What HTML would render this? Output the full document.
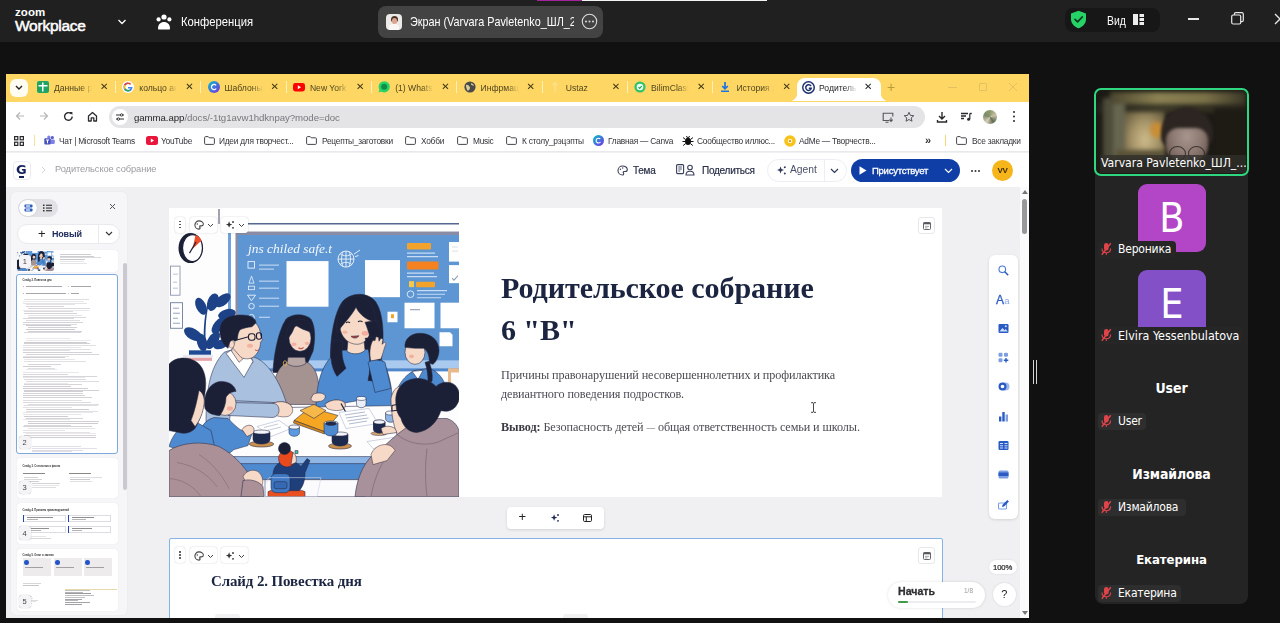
<!DOCTYPE html>
<html lang="ru">
<head>
<meta charset="utf-8">
<title>Zoom Workplace</title>
<style>
*{box-sizing:border-box;margin:0;padding:0}
html,body{width:1280px;height:623px;overflow:hidden;background:#111;font-family:"Liberation Sans","DejaVu Sans",sans-serif;}
#root{position:absolute;left:0;top:0;width:1280px;height:623px;overflow:hidden;background:#111;}
.abs{position:absolute}
/* ---------- zoom top bar ---------- */
#zbar{position:absolute;left:0;top:0;width:1280px;height:42px;background:#202020;color:#fff}
#zbar .t{position:absolute;white-space:nowrap;color:#fff}
/* ---------- shared screen ---------- */
#scr{position:absolute;left:6px;top:74px;width:1023px;height:544px;background:#f0eff2;overflow:hidden;filter:blur(.35px)}
#tabs{position:absolute;left:0;top:0;width:1023px;height:27.500px;background:#fdd663}
.tab{position:absolute;top:0;height:27px;font-size:8.6px;color:#50461f;white-space:nowrap}
.tab .tx{position:absolute;left:18px;top:8.5px;width:38px;overflow:hidden;-webkit-mask-image:linear-gradient(90deg,#000 70%,transparent 100%);mask-image:linear-gradient(90deg,#000 70%,transparent 100%)}
.tab .ic{position:absolute;left:1px;top:7px;width:12px;height:12px}
.tab .x{position:absolute;left:64px;top:6.5px;font-size:10px;color:#3c3514;font-weight:bold}
.tab .sep{position:absolute;left:79px;top:7px;width:1px;height:12px;background:#fff0b8}
#tool{position:absolute;left:0;top:27.500px;width:1023px;height:28.500px;background:#fff}
#omni{position:absolute;left:103px;top:4px;width:816px;height:22px;border-radius:11px;background:#e4e3e6}
#bm{position:absolute;left:0;top:56px;width:1023px;height:22px;background:#fff;font-size:8.350px;color:#33343a;border-bottom:1px solid #e9e8ec}
#bm .b{position:absolute;top:6px;white-space:nowrap;letter-spacing:-.25px}
.fold{position:absolute;top:6px;width:11px;height:9px}
/* ---------- gamma ---------- */
#gh{position:absolute;left:0;top:79px;width:1023px;height:34px;background:#fff}
#gbody{position:absolute;left:0;top:113px;width:1023px;height:431px;background:#f0eff2}
.gt{font-size:10px;color:#2a3048;white-space:nowrap;letter-spacing:-.25px;font-weight:500;-webkit-text-stroke:.2px #2a3048;margin-top:.5px}
.ser{font-family:"Liberation Serif","DejaVu Serif",serif}
.tn{font-size:7.500px;color:#444;font-weight:500}
.zt{font-family:"DejaVu Sans Condensed","DejaVu Sans","Liberation Sans",sans-serif}
.nm{font-size:12px;color:#fff;white-space:nowrap;letter-spacing:-.2px}
.sx{transform-origin:0 50%}
</style>
</head>
<body>
<div id="root">

<!-- ================= ZOOM TOP BAR ================= -->
<div id="zbar">
  <div class="t" style="left:15px;top:5.500px;font-size:11.500px;font-weight:bold;letter-spacing:.1px">zoom</div>
  <div class="t" style="left:15px;top:16.500px;font-size:15.500px;font-weight:normal;letter-spacing:-.25px;-webkit-text-stroke:.5px #fff">Workplace</div>
  <svg class="abs" style="left:117px;top:17.500px" width="10" height="8" viewBox="0 0 10 8"><path d="M1.5 2 L5 5.5 L8.5 2" fill="none" stroke="#fff" stroke-width="1.3"/></svg>
  <svg class="abs" style="left:155px;top:13px" width="18" height="17" viewBox="0 0 18 17"><g fill="#fff"><circle cx="9" cy="4" r="2.6"/><circle cx="3.6" cy="6.4" r="2.1"/><circle cx="14.4" cy="6.4" r="2.1"/><path d="M3 15.5c0-4 2.6-6.4 6-6.4s6 2.4 6 6.400c0 .6-.4 1-1 1H4c-.6 0-1-.4-1-1z"/></g></svg>
  <div class="t sx" style="left:181px;top:13.500px;font-size:13px;transform:scaleX(.865)">Конференция</div>
  <!-- share pill -->
  <div class="abs" style="left:378px;top:6px;width:225px;height:32px;border-radius:8px;background:#434343"></div>
  <div class="abs" style="left:386px;top:14px;width:16px;height:16px;border-radius:4px;background:#ece9e6;overflow:hidden"><div class="abs" style="left:4.500px;top:1.500px;width:7px;height:6px;border-radius:3.500px 3.500px 2px 2px;background:#4a3328"></div><div class="abs" style="left:5.500px;top:3.500px;width:5px;height:6px;border-radius:2.500px;background:#dba58d"></div><div class="abs" style="left:3px;top:10px;width:10px;height:8px;border-radius:4px 4px 0 0;background:#faf8f6"></div></div>
  <div class="abs" style="left:410px;top:10px;width:164px;height:24px;overflow:hidden"><div class="t sx" style="left:0;top:3.500px;font-size:13px;transform:scaleX(.832)">Экран (Varvara Pavletenko_ШЛ_2</div></div>
  <svg class="abs" style="left:581px;top:13px" width="17" height="17" viewBox="0 0 17 17"><circle cx="8.500" cy="8.500" r="7.2" fill="none" stroke="#ddd" stroke-width="1.1"/><circle cx="5" cy="8.500" r="1" fill="#ddd"/><circle cx="8.500" cy="8.500" r="1" fill="#ddd"/><circle cx="12" cy="8.500" r="1" fill="#ddd"/></svg>
  <!-- security + view -->
  <div class="abs" style="left:1065px;top:8px;width:95px;height:24px;border-radius:8px;background:#171717"></div>
  <svg class="abs" style="left:1070px;top:10px" width="17" height="19" viewBox="0 0 17 19"><path d="M8.500 .8 L16 3.600 V9c0 4.600-3.200 7.800-7.500 9.300C4.200 16.800 1 13.600 1 9V3.600z" fill="#26d367"/><path d="M5 9.300l2.600 2.600 4.700-5" fill="none" stroke="#0d3b1e" stroke-width="1.700" stroke-linecap="round" stroke-linejoin="round"/></svg>
  <div class="t sx" style="left:1107px;top:12.500px;font-size:13px;transform:scaleX(.8)">Вид</div>
  <svg class="abs" style="left:1133px;top:14px" width="11" height="11" viewBox="0 0 11 11"><rect x="0" y="0" width="5" height="11" fill="#eee"/><rect x="6.500" y="0" width="4.500" height="3" fill="#eee"/><rect x="6.500" y="4" width="4.500" height="3" fill="#eee"/><rect x="6.500" y="8" width="4.500" height="3" fill="#eee"/></svg>
  <div class="abs" style="left:1188px;top:18px;width:11px;height:1.5px;background:#e8e8e8"></div>
  <svg class="abs" style="left:1231px;top:12px" width="13" height="13" viewBox="0 0 13 13"><rect x=".7" y="3" width="9" height="9" rx="1.500" fill="none" stroke="#e8e8e8" stroke-width="1.200"/><path d="M3.300 3V2.200c0-.8.600-1.500 1.500-1.500h6c.8 0 1.500.7 1.500 1.500v6c0 .8-.6 1.500-1.500 1.500h-1" fill="none" stroke="#e8e8e8" stroke-width="1.200"/></svg>
  <svg class="abs" style="left:1274px;top:13px" width="12" height="12" viewBox="0 0 12 12"><path d="M1 1l10 10M11 1L1 11" stroke="#e8e8e8" stroke-width="1.300"/></svg>
</div>
<!-- little white / pink strip at very top -->
<div class="abs" style="left:537px;top:0;width:45px;height:1.300px;background:#a3249a"></div>
<div class="abs" style="left:582px;top:0;width:185px;height:1.300px;background:#f4f4f4"></div>

<!-- ================= SHARED SCREEN ================= -->
<div id="scr">
  <div id="tabs">
<div class="abs" style="left:4px;top:5px;width:18px;height:18px;border-radius:6px;background:#fffdf2"></div><svg class="abs" style="left:9px;top:11px" width="8" height="6" viewBox="0 0 8 6"><path d="M1 1l3 3 3-3" fill="none" stroke="#222" stroke-width="1.400"/></svg>
<div class="tab" style="left:30.0px"><svg class="ic" viewBox="0 0 12 12"><rect x="0" y="0" width="12" height="12" rx="2" fill="#1fa463"/><rect x="5" y="1.500" width="1.500" height="9" fill="#fff"/><rect x="1.500" y="4" width="9" height="1.500" fill="#fff"/></svg><span class="tx">Данные р</span><span class="x">✕</span><span class="sep"></span></div>
<div class="tab" style="left:115.3px"><svg class="ic" viewBox="0 0 12 12"><circle cx="6" cy="6" r="6" fill="#fff"/><path d="M6 2.300a3.700 3.700 0 1 0 3.600 4.500H6" fill="none" stroke="#4285f4" stroke-width="1.600"/><path d="M2.800 4.200A3.700 3.700 0 0 1 8.600 3.300" fill="none" stroke="#ea4335" stroke-width="1.600"/><path d="M2.800 7.800A3.700 3.700 0 0 1 2.800 4.200" fill="none" stroke="#fbbc05" stroke-width="1.600"/><path d="M2.800 7.800A3.700 3.700 0 0 0 8 9.100" fill="none" stroke="#34a853" stroke-width="1.600"/></svg><span class="tx">кольцо ан</span><span class="x">✕</span><span class="sep"></span></div>
<div class="tab" style="left:200.6px"><svg class="ic" viewBox="0 0 12 12"><defs><linearGradient id="cv" x1="0" y1="0" x2="1" y2="1"><stop offset="0" stop-color="#00c4cc"/><stop offset="1" stop-color="#7d2ae8"/></linearGradient></defs><circle cx="6" cy="6" r="6" fill="url(#cv)"/><path d="M8.200 7.500A2.600 2.600 0 1 1 8 4.300" fill="none" stroke="#fff" stroke-width="1.200"/></svg><span class="tx">Шаблоны</span><span class="x">✕</span><span class="sep"></span></div>
<div class="tab" style="left:285.9px"><svg class="ic" viewBox="0 0 12 12"><rect x="0" y="2" width="12" height="8.400" rx="2.400" fill="#f00"/><path d="M4.800 4.200L8 6.200 4.800 8.200z" fill="#fff"/></svg><span class="tx">New York</span><span class="x">✕</span><span class="sep"></span></div>
<div class="tab" style="left:371.2px"><svg class="ic" viewBox="0 0 12 12"><circle cx="6.200" cy="5.800" r="5.600" fill="#25d366"/><path d="M.6 11.600l1.200-3.400 2 2z" fill="#25d366"/><circle cx="6.200" cy="5.800" r="3" fill="#128c4a"/></svg><span class="tx">(1) Whats</span><span class="x">✕</span><span class="sep"></span></div>
<div class="tab" style="left:456.5px"><svg class="ic" viewBox="0 0 12 12"><circle cx="6" cy="6" r="5.600" fill="#4a4a4a"/><path d="M2 4c1.500-.5 2.500.5 3.500 1.500S6 8.500 4.500 9.500 2 6 2 4zM7 2c1 .5 2.500 1 3 2.500-1 .5-2-.3-3-1z" fill="#d9cf9a"/></svg><span class="tx">Инфрмац</span><span class="x">✕</span><span class="sep"></span></div>
<div class="tab" style="left:541.8px"><svg class="ic" viewBox="0 0 12 12"><path d="M6 1.500v9M3.500 4L6 1.500 8.500 4" stroke="#fbe08a" stroke-width="1.500" fill="none"/></svg><span class="tx">Ustaz</span><span class="x">✕</span><span class="sep"></span></div>
<div class="tab" style="left:627.1px"><svg class="ic" viewBox="0 0 12 12"><circle cx="6" cy="6" r="5.600" fill="#2fc36a"/><circle cx="6" cy="6" r="3.300" fill="#eafff0"/><path d="M4.500 6.200l1.200 1.200 2-2.400" stroke="#1d9d52" stroke-width="1.100" fill="none"/></svg><span class="tx">BilimClass</span><span class="x">✕</span><span class="sep"></span></div>
<div class="tab" style="left:712.4px"><svg class="ic" viewBox="0 0 12 12"><path d="M6 1v6.500M3.200 5L6 7.800 8.800 5" stroke="#1a73e8" stroke-width="1.700" fill="none"/><rect x="2" y="9.500" width="8" height="1.500" fill="#1a73e8"/></svg><span class="tx">История з</span><span class="x">✕</span></div>
<div class="abs" style="left:791px;top:4px;width:84px;height:23px;background:#fff;border-radius:8px 8px 0 0"></div>
<div class="abs" style="left:783px;top:19px;width:8px;height:8px;background:radial-gradient(circle at 0 0,transparent 8px,#fff 8.500px)"></div>
<div class="abs" style="left:875px;top:19px;width:8px;height:8px;background:radial-gradient(circle at 100% 0,transparent 8px,#fff 8.500px)"></div>
<svg class="abs" style="left:796px;top:7px" width="13" height="13" viewBox="0 0 13 13"><circle cx="6.500" cy="6.500" r="6.500" fill="#1c2f6e"/><circle cx="6.500" cy="6.500" r="5" fill="#fff"/><path d="M9 5.200A2.800 2.800 0 1 0 9.300 7.200H6.800" fill="none" stroke="#1c2f6e" stroke-width="1.500"/></svg>
<div class="tab" style="left:795px;color:#26272c"><span class="tx" style="left:18px">Родитель</span><span class="x" style="left:63px;color:#222">✕</span></div>
<div class="abs" style="left:881px;top:5px;font-size:14px;color:#b89b3a;font-weight:400">+</div>
<div class="abs" style="left:942px;top:13px;width:9px;height:1px;background:#e2c164"></div>
<div class="abs" style="left:973px;top:9px;width:8px;height:8px;border:1px solid #e2c164;border-radius:1px"></div>
<svg class="abs" style="left:1002px;top:8px" width="10" height="10" viewBox="0 0 10 10"><path d="M1 1l8 8M9 1L1 9" stroke="#e2c164" stroke-width="1"/></svg>
</div>
  <div id="tool">
<svg class="abs" style="left:9px;top:9px" width="10" height="10" viewBox="0 0 10 10"><path d="M9 5H1.500M5 1.500L1.500 5 5 8.500" fill="none" stroke="#b6b6ba" stroke-width="1.200"/></svg>
<svg class="abs" style="left:33px;top:9px" width="10" height="10" viewBox="0 0 10 10"><path d="M1 5h7.500M5 1.500L8.500 5 5 8.500" fill="none" stroke="#b6b6ba" stroke-width="1.200"/></svg>
<svg class="abs" style="left:57px;top:9px" width="11" height="11" viewBox="0 0 11 11"><path d="M9.200 5.500A3.800 3.800 0 1 1 8 2.700" fill="none" stroke="#2c2c30" stroke-width="1.400"/><path d="M6.400 1h3v3z" fill="#2c2c30"/></svg>
<svg class="abs" style="left:81px;top:9px" width="11" height="11" viewBox="0 0 11 11"><path d="M1.500 5L5.500 1.500 9.500 5V10H6.800V6.800H4.200V10H1.500z" fill="none" stroke="#2c2c30" stroke-width="1.300" stroke-linejoin="round"/></svg>
<div id="omni"></div>
<div class="abs" style="left:106px;top:7px;width:16px;height:16px;border-radius:8px;background:#fff"></div>
<svg class="abs" style="left:109px;top:10px" width="10" height="10" viewBox="0 0 10 10"><path d="M1 3h4M7.800 3H9M1 7h1.200M5 7h4" stroke="#333" stroke-width="1.100"/><circle cx="6.600" cy="3" r="1.200" fill="none" stroke="#333" stroke-width="1"/><circle cx="3.400" cy="7" r="1.200" fill="none" stroke="#333" stroke-width="1"/></svg>
<div class="abs" style="left:128px;top:10px;font-size:9.650px;color:#1f1f23;white-space:nowrap;letter-spacing:-.05px">gamma.app<span style="color:#77777c">/docs/-1tg1avw1hdknpay?mode=doc</span></div>
<svg class="abs" style="left:876px;top:10px" width="12" height="11" viewBox="0 0 12 11"><path d="M7 8.500H1.200V1.200H10.800V4.500" fill="none" stroke="#55565b" stroke-width="1.100"/><path d="M3.500 10.300h3M9 5.500v3.700M7.300 7.700L9 9.400l1.700-1.700" fill="none" stroke="#55565b" stroke-width="1.100"/></svg>
<svg class="abs" style="left:897px;top:9px" width="12" height="12" viewBox="0 0 12 12"><path d="M6 1.300l1.400 3.100 3.400.3-2.600 2.200.8 3.300L6 8.500 3 10.200l.8-3.300L1.200 4.700l3.400-.3z" fill="none" stroke="#55565b" stroke-width="1"/></svg>
<svg class="abs" style="left:930px;top:9px" width="12" height="12" viewBox="0 0 12 12"><path d="M6 1v6.500M3 5l3 3 3-3M1.500 9v2h9V9" fill="none" stroke="#2a2a2e" stroke-width="1.400"/></svg>
<svg class="abs" style="left:954px;top:9px" width="12" height="12" viewBox="0 0 12 12"><path d="M1 2.500h7M1 5h5M1 7.500h3" stroke="#2a2a2e" stroke-width="1.300"/><path d="M9.800 2.500v5.500" stroke="#2a2a2e" stroke-width="1.200"/><circle cx="8.600" cy="8.300" r="1.500" fill="#2a2a2e"/><path d="M9.800 2.500h2" stroke="#2a2a2e" stroke-width="1.400"/></svg>
<div class="abs" style="left:977px;top:8px;width:14px;height:14px;border-radius:50%;background:conic-gradient(#8c9a6a,#c9c1a5,#5f6f55,#d8cdb6,#7b8a6e,#8c9a6a)"></div>
<div class="abs" style="left:1007px;top:9px;width:2px;height:2px;border-radius:50%;background:#2a2a2e;box-shadow:0 4.500px 0 #2a2a2e,0 9px 0 #2a2a2e"></div>
</div>
  <div id="bm">
<svg class="abs" style="left:8px;top:6px" width="10" height="10" viewBox="0 0 10 10"><g fill="none" stroke="#2a2a2e" stroke-width="1.200"><rect x=".6" y=".6" width="3.200" height="3.200"/><rect x="6.200" y=".6" width="3.200" height="3.200"/><rect x=".6" y="6.200" width="3.200" height="3.200"/><rect x="6.200" y="6.200" width="3.200" height="3.200"/></g></svg>
<div class="abs" style="left:28px;top:5px;width:1px;height:11px;background:#f7e29a"></div>
<svg class="abs" style="left:38px;top:5px" width="11" height="11" viewBox="0 0 11 11"><circle cx="8.300" cy="2.600" r="1.700" fill="#5b5fc7"/><rect x="6" y="4.500" width="4.800" height="4.500" rx="1.200" fill="#7b83eb"/><circle cx="4.800" cy="2" r="1.600" fill="#7b83eb"/><rect x=".3" y="3.200" width="6.400" height="6.400" rx="1" fill="#4b53bc"/><path d="M2 5h3M3.500 5v3.300" stroke="#fff" stroke-width="1"/></svg>
<span class="b" style="left:53px">Чат | Microsoft Teams</span>
<svg class="abs" style="left:140px;top:6px" width="12" height="9" viewBox="0 0 12 9"><rect width="12" height="9" rx="2.500" fill="#e8163a"/><path d="M4.800 2.500L8 4.500 4.800 6.500z" fill="#fff"/></svg>
<span class="b" style="left:155px">YouTube</span>
<svg class="fold" style="left:198px" viewBox="0 0 11 9"><path d="M.6 1.600c0-.6.400-1 1-1h2.600l1 1.200h4.200c.6 0 1 .4 1 1v4.600c0 .6-.4 1-1 1H1.600c-.6 0-1-.4-1-1z" fill="none" stroke="#46474c" stroke-width="1"/></svg>
<span class="b" style="left:213px">Идеи для творчест...</span>
<svg class="fold" style="left:300px" viewBox="0 0 11 9"><path d="M.6 1.600c0-.6.400-1 1-1h2.600l1 1.200h4.200c.6 0 1 .4 1 1v4.600c0 .6-.4 1-1 1H1.600c-.6 0-1-.4-1-1z" fill="none" stroke="#46474c" stroke-width="1"/></svg>
<span class="b" style="left:316px">Рецепты_заготовки</span>
<svg class="fold" style="left:399px" viewBox="0 0 11 9"><path d="M.6 1.600c0-.6.400-1 1-1h2.600l1 1.200h4.200c.6 0 1 .4 1 1v4.600c0 .6-.4 1-1 1H1.600c-.6 0-1-.4-1-1z" fill="none" stroke="#46474c" stroke-width="1"/></svg>
<span class="b" style="left:415px">Хобби</span>
<svg class="fold" style="left:451px" viewBox="0 0 11 9"><path d="M.6 1.600c0-.6.400-1 1-1h2.600l1 1.200h4.200c.6 0 1 .4 1 1v4.600c0 .6-.4 1-1 1H1.600c-.6 0-1-.4-1-1z" fill="none" stroke="#46474c" stroke-width="1"/></svg>
<span class="b" style="left:467px">Music</span>
<svg class="fold" style="left:500px" viewBox="0 0 11 9"><path d="M.6 1.600c0-.6.400-1 1-1h2.600l1 1.200h4.200c.6 0 1 .4 1 1v4.600c0 .6-.4 1-1 1H1.600c-.6 0-1-.4-1-1z" fill="none" stroke="#46474c" stroke-width="1"/></svg>
<span class="b" style="left:516px">К столу_рэцэпты</span>
<svg class="abs" style="left:587px;top:5px" width="11" height="11" viewBox="0 0 11 11"><circle cx="5.500" cy="5.500" r="5.500" fill="url(#cv)"/><path d="M7.500 7A2.400 2.400 0 1 1 7.300 4" fill="none" stroke="#fff" stroke-width="1.100"/></svg>
<span class="b" style="left:602px">Главная — Canva</span>
<svg class="abs" style="left:676px;top:5px" width="12" height="12" viewBox="0 0 12 12"><ellipse cx="6" cy="6.300" rx="3" ry="3.600" fill="#111"/><path d="M1 2.500l2.500 2M11 2.500l-2.500 2M.5 6.500h3M11.500 6.500h-3M1.200 10.500l2.500-2M10.800 10.500l-2.500-2M4.500 1l1 2M7.500 1l-1 2" stroke="#111" stroke-width="1"/></svg>
<span class="b" style="left:691px">Сообщество иллюс...</span>
<svg class="abs" style="left:778px;top:5px" width="12" height="12" viewBox="0 0 12 12"><circle cx="6" cy="6" r="5.800" fill="#f9c21b"/><circle cx="6" cy="6" r="2.300" fill="#fff3c4"/><circle cx="6" cy="6" r="1" fill="#c98700"/></svg>
<span class="b" style="left:793px">AdMe — Творчеств...</span>
<span class="b" style="left:919px;top:3.500px;font-size:11px;font-weight:bold;color:#333">»</span>
<div class="abs" style="left:939px;top:5px;width:1px;height:11px;background:#f4d66d"></div>
<svg class="fold" style="left:950px" viewBox="0 0 11 9"><path d="M.6 1.600c0-.6.400-1 1-1h2.600l1 1.200h4.200c.6 0 1 .4 1 1v4.600c0 .6-.4 1-1 1H1.600c-.6 0-1-.4-1-1z" fill="none" stroke="#46474c" stroke-width="1"/></svg>
<span class="b" style="left:966px">Все закладки</span>
</div>
  <div id="gh">
<div class="abs" style="left:7px;top:8px;width:18px;height:19px;border:1px solid #ececf0;border-radius:4px;background:#fff"></div>
<div class="abs" style="left:10px;top:9px;font-size:13px;font-weight:bold;color:#14205a;font-family:'DejaVu Sans','Liberation Sans',sans-serif">G</div>
<div class="abs" style="left:13px;top:23px;width:5px;height:1.500px;background:#14205a"></div>
<svg class="abs" style="left:35px;top:13px" width="5" height="8" viewBox="0 0 5 8"><path d="M1 1l3 3-3 3" fill="none" stroke="#d2d2d8" stroke-width="1"/></svg>
<div class="abs" style="left:49px;top:11px;font-size:9.300px;color:#9b9ba3;white-space:nowrap;letter-spacing:-.1px">Родительское собрание</div>
<svg class="abs" style="left:611px;top:12px" width="11" height="11" viewBox="0 0 11 11"><path d="M5.500 1a4.500 4.500 0 1 0 0 9c.8 0 1.200-.5 1.200-1.100 0-.7-.5-.9-.5-1.500 0-.5.400-.9 1-.9h1.200c1.100 0 1.900-.8 1.900-2C10.300 2.600 8.200 1 5.500 1z" fill="none" stroke="#3a405a" stroke-width="1.100"/><circle cx="3.400" cy="4.200" r=".7" fill="#3a405a"/><circle cx="5.700" cy="3" r=".7" fill="#3a405a"/></svg>
<div class="abs gt" style="left:627px;top:11px">Тема</div>
<svg class="abs" style="left:670px;top:11px" width="20" height="12" viewBox="0 0 20 12"><rect x=".6" y=".6" width="7" height="9" rx="1" fill="none" stroke="#3a405a" stroke-width="1.100"/><path d="M2.300 3h3.600M2.300 5h3.600M2.300 7h2" stroke="#3a405a" stroke-width=".9"/><circle cx="14" cy="3.500" r="2.300" fill="none" stroke="#3a405a" stroke-width="1.100"/><path d="M10 11c0-2.300 1.700-3.700 4-3.700s4 1.400 4 3.700z" fill="none" stroke="#3a405a" stroke-width="1.100"/></svg>
<div class="abs gt" style="left:696px;top:11px">Поделиться</div>
<div class="abs" style="left:761px;top:6px;width:80px;height:23px;border:1px solid #eceef4;border-radius:12px;background:#fff"></div>
<div class="abs" style="left:818px;top:7px;width:1px;height:21px;background:#eceef4"></div>
<svg class="abs" style="left:770px;top:12px" width="11" height="11" viewBox="0 0 11 11"><path d="M4.500 1.500l1 2.500 2.500 1-2.500 1-1 2.500-1-2.500L1 5l2.500-1z" fill="#333b63"/><circle cx="8.800" cy="2.200" r="1" fill="#333b63"/><circle cx="8.800" cy="8.600" r="1" fill="#333b63"/></svg>
<div class="abs" style="left:784px;top:11px;font-size:10.300px;color:#4a5068;white-space:nowrap">Agent</div>
<svg class="abs" style="left:824px;top:15px" width="9" height="6" viewBox="0 0 9 6"><path d="M1 1l3.500 3.500L8 1" fill="none" stroke="#2a3158" stroke-width="1.100"/></svg>
<div class="abs" style="left:845px;top:6px;width:109px;height:23px;border-radius:12px;background:#0f3fa6"></div>
<svg class="abs" style="left:853px;top:13px" width="8" height="9" viewBox="0 0 8 9"><path d="M.5 .3L7.500 4.500 .5 8.700z" fill="#fff"/></svg>
<div class="abs" style="left:866px;top:12px;font-size:9.500px;color:#fff;white-space:nowrap;letter-spacing:-.25px;-webkit-text-stroke:.3px #fff">Присутствует</div>
<svg class="abs" style="left:938px;top:15px" width="9" height="6" viewBox="0 0 9 6"><path d="M1 1l3.500 3.500L8 1" fill="none" stroke="#fff" stroke-width="1.100"/></svg>
<div class="abs" style="left:965px;top:17px;width:2px;height:2px;border-radius:50%;background:#333;box-shadow:3.500px 0 0 #333,7px 0 0 #333"></div>
<div class="abs" style="left:986px;top:7px;width:21px;height:21px;border-radius:50%;background:#f6b51a;color:#3a2a00;font-size:8px;font-weight:bold;text-align:center;line-height:21px;letter-spacing:-.3px">VV</div>
</div>
  <div id="gbody">
<div class="abs" style="left:5px;top:5px;width:115.5px;height:423px;background:#f6f5f8;border-radius:5px;box-shadow:0 0 2px rgba(0,0,0,.06)"></div>
<div class="abs" style="left:12px;top:12px;width:39.5px;height:17.5px;background:#e2e2e6;border-radius:9px"></div>
<div class="abs" style="left:13px;top:13px;width:18px;height:15.5px;background:#fff;border-radius:8px;box-shadow:0 0 1px rgba(0,0,0,.3)"></div>
<svg class="abs" style="left:17.5px;top:16.5px" width="9" height="8" viewBox="0 0 9 8"><rect x=".5" y=".5" width="8" height="3" rx=".8" fill="#2b5fc0"/><rect x=".5" y="4.500" width="8" height="3" rx=".8" fill="#2b5fc0"/><rect x="2" y="1.400" width="4" height="1.200" fill="#fff"/><rect x="2" y="5.400" width="4" height="1.200" fill="#fff"/></svg>
<svg class="abs" style="left:37px;top:16.5px" width="9" height="8" viewBox="0 0 9 8"><g fill="#333"><rect x="0" y=".5" width="1.500" height="1.500"/><rect x="0" y="3.300" width="1.500" height="1.500"/><rect x="0" y="6" width="1.500" height="1.500"/><rect x="3" y=".7" width="6" height="1.100"/><rect x="3" y="3.500" width="6" height="1.100"/><rect x="3" y="6.200" width="6" height="1.100"/></g></svg>
<svg class="abs" style="left:103px;top:16px" width="7" height="7" viewBox="0 0 7 7"><path d="M1 1l5 5M6 1L1 6" stroke="#555" stroke-width="1"/></svg>
<div class="abs" style="left:11px;top:36.5px;width:102.5px;height:20.5px;background:#fff;border:1px solid #e9e9ee;border-radius:11px"></div>
<div class="abs" style="left:92px;top:37.5px;width:1px;height:18.5px;background:#e9e9ee"></div>
<div class="abs" style="left:32px;top:38.5px;font-size:13px;color:#222;font-weight:400">+</div>
<div class="abs" style="left:46px;top:41.5px;font-size:9px;color:#1d2a5c;font-weight:bold;letter-spacing:-.2px">Новый</div>
<svg class="abs" style="left:99px;top:44px" width="8" height="6" viewBox="0 0 8 6"><path d="M1 1l3 3 3-3" fill="none" stroke="#333" stroke-width="1.100"/></svg>
<div class="abs" style="left:117px;top:76px;width:3.5px;height:227px;background:#c9c9cf;border-radius:2px"></div>
<div class="abs" style="left:10.5px;top:63px;width:101px;height:22px;background:#fff;border-radius:3px;box-shadow:0 0 1px rgba(0,0,0,.15)"></div>
<svg id="illt" class="abs" style="left:10.5px;top:63.5px;border-radius:2px" width="37.500" height="20.500" viewBox="0 70 290 158" preserveAspectRatio="xMidYMid slice"><rect width="290" height="274" fill="#fdfdfe"/><rect x="56" y="1" width="234" height="1.500" fill="#56688f"/><rect x="66" y="9.500" width="224" height="4" fill="#8a8ca6"/><rect x="59" y="7" width="3" height="80" fill="#6fa0d8"/><rect x="62" y="9" width="7" height="125" fill="#fff"/><rect x="66.500" y="9.500" width="2.500" height="125" fill="#8a8ca6"/><rect x="69" y="13" width="221" height="127" fill="#5d96d2"/><rect x="69" y="138" width="221" height="9" fill="#a9c9ee"/><rect x="69" y="146" width="221" height="3" fill="#4f86c9"/><g transform="translate(-3 0)"><rect x="82" y="39.5" width="6.500" height="6.500" fill="none" stroke="#eaf2fc" stroke-width=".9"/><path d="M93 43h20" stroke="#dbe8f8" stroke-width=".9"/><path d="M83 61l2.500-7 2.500 7z" fill="none" stroke="#eaf2fc" stroke-width=".8"/><path d="M93 59h20" stroke="#dbe8f8" stroke-width=".9"/><rect x="82.500" y="64" width="6" height="3.500" fill="none" stroke="#eaf2fc" stroke-width=".8"/><path d="M93 66h20" stroke="#dbe8f8" stroke-width=".9"/><path d="M81.500 73h8l-4 5.500z" fill="none" stroke="#eaf2fc" stroke-width=".9"/><path d="M93 76h20" stroke="#dbe8f8" stroke-width=".9"/><circle cx="85.500" cy="84" r="2.800" fill="none" stroke="#eaf2fc" stroke-width=".9"/><path d="M93 84h20" stroke="#dbe8f8" stroke-width=".9"/><circle cx="85.500" cy="95" r="2.800" fill="none" stroke="#eaf2fc" stroke-width=".9"/><path d="M93 95h11" stroke="#dbe8f8" stroke-width=".9"/><path d="M93 47h15" stroke="#dbe8f8" stroke-width=".9"/></g><rect x="117.500" y="39" width="42" height="45.500" fill="#fff"/><rect x="196" y="38" width="35" height="37" fill="#fff"/><g fill="none" stroke="#eef4fc" stroke-width=".9"><circle cx="177" cy="37" r="8"/><path d="M169 37h16M177 29v16M171 31.500c4 3 8 3 12 0M171 42.500c4-3 8-3 12 0M174 29.500c-2 5-2 10 0 15M180 29.500c2 5 2 10 0 15"/><path d="M185 32l6-4M186 34.500l3.500-1"/></g><rect x="238" y="21" width="24" height="6.500" rx="1" fill="#f3a22c"/><path d="M238 31h28M238 34.500h31" stroke="#c8dcf4" stroke-width="1.100"/><rect x="238" y="39.500" width="31.500" height="8" rx="1" fill="#f5811f"/><path d="M238 51h27M238 54.500h30" stroke="#c8dcf4" stroke-width="1.100"/><rect x="240" y="59" width="5" height="6" fill="#f7c948"/><rect x="247" y="59.500" width="19" height="5.500" rx="1" fill="#f3a22c"/><circle cx="241.500" cy="72" r="3.300" fill="none" stroke="#e6effa" stroke-width=".9"/><path d="M248 68.500h30M248 72h28M248 75.500h24" stroke="#c8dcf4" stroke-width="1.100"/><rect x="280" y="20" width="10" height="19.500" fill="#fff"/><path d="M283 25h6M283 29h6" stroke="#c9cfdc" stroke-width=".7"/><rect x="280" y="43" width="10" height="18" fill="#fff"/><path d="M283 56l2 2 4-4.500" fill="none" stroke="#8d9ab8" stroke-width="1"/><rect x="218.500" y="89.500" width="10" height="10.500" fill="#fff"/><rect x="222" y="92" width="3" height="4" fill="#f3a22c"/><rect x="235.500" y="80.500" width="30" height="25.500" fill="#fff"/><path d="M241 87.500h10" stroke="#7a86a8" stroke-width=".9"/><rect x="271.500" y="80.500" width="18.500" height="25.500" fill="#fff"/><path d="M270.500 110h10.500l2.500 2.500v11.500h-13z" fill="#fff"/><ellipse cx="21.500" cy="26" rx="12" ry="15" fill="#1b2036"/><ellipse cx="23.500" cy="26" rx="10" ry="13.500" fill="#fff" stroke="#1b2036" stroke-width="1.200"/><path d="M23.500 27L26.500 13a10 13 0 0 1 6 5.500z" fill="#ee4f2a"/><path d="M27 20l-6.500 11" stroke="#1b2036" stroke-width="1.200"/><rect x="1.500" y="44" width="9.500" height="29" fill="#fff" stroke="#7d88a4" stroke-width=".8"/><path d="M4 52h5M4 60h4M4 66h5" stroke="#9aa7c4" stroke-width=".7"/><rect x="1.500" y="80.500" width="12" height="25.500" fill="#fff" stroke="#6f7c9c" stroke-width=".9"/><path d="M4 86h6M4 91h7M4 96h5M4 101h7" stroke="#7f8eb3" stroke-width=".8"/><g fill="#1d4288"><path d="M35 128c-1-18 0-32 3-45l1.500.3c-3 13-3.500 27-2.500 44.700z"/><ellipse cx="32" cy="84" rx="5" ry="9" transform="rotate(-25 32 84)"/><ellipse cx="44" cy="80" rx="5.500" ry="9" transform="rotate(20 44 80)"/><ellipse cx="54" cy="78" rx="5" ry="9" transform="rotate(50 54 78)"/><ellipse cx="58" cy="92" rx="5" ry="9" transform="rotate(75 58 92)"/><ellipse cx="50" cy="103" rx="5" ry="10" transform="rotate(40 50 103)"/><ellipse cx="24" cy="112" rx="5.500" ry="10" transform="rotate(-60 24 112)"/><ellipse cx="33" cy="120" rx="5" ry="9" transform="rotate(-15 33 120)"/><ellipse cx="44" cy="118" rx="5" ry="10" transform="rotate(35 44 118)"/><ellipse cx="52" cy="122" rx="4.500" ry="8" transform="rotate(70 52 122)"/></g><rect x="20" y="128" width="22" height="4.500" fill="#1f4b94"/><rect x="14" y="132.500" width="30" height="3" fill="#e8e8ef"/><rect x="16" y="135.500" width="27" height="3" fill="#e6a3a8"/><path d="M279 146h11v4h-8v12h-3z" fill="#e8b98a"/><g stroke="#262b47" stroke-width=".55" stroke-linejoin="round"><g transform="translate(0 3)"><path d="M222 186c3-22 12-36 24-41l14-2c9 3 15 10 18 22l2 20z" fill="#4d8ad0"/><path d="M243 146l6 8 5-9z" fill="#fff"/><ellipse cx="246" cy="127" rx="10" ry="12" fill="#f6d9c6"/><path d="M236 122c-1-8 6-14 15-14 11 0 19 7 19 17 0 6-3 12-6 14l-4-1c1-6-1-12-5-15-6 0-13 0-19-1z" fill="#1b2036"/><path d="M260 136c2 6 4 12 3 20l-4 1c0-8-1-14-3-20z" fill="#1b2036"/><ellipse cx="242.500" cy="131" rx="2.500" ry="1.800" fill="#f2a596" stroke="none" opacity=".8"/></g><path d="M104 150c0-10 4-40 13-53 6-6 19-6 25 0 5 8 4 22 2 32l-10 22z" fill="#1b2036"/><path d="M104 182c-1-18 2-36 14-42l20 0c8 4 12 14 12 30l-2 12z" fill="#a59392"/><path d="M118 141c4 4 14 4 19 0l-1-6h-17z" fill="#b7a5a3"/><ellipse cx="131" cy="116" rx="11" ry="13" fill="#f6d9c6"/><path d="M117 118c0-14 6-21 15-21 7 0 12 6 12 13-6-1-14-4-18-8-1 6-4 11-9 16z" fill="#1b2036"/><ellipse cx="125" cy="122" rx="2.600" ry="1.800" fill="#f2a596" stroke="none" opacity=".8"/><ellipse cx="138" cy="121" rx="2.300" ry="1.600" fill="#f2a596" stroke="none" opacity=".8"/><path d="M129.500 125.500c2 1.500 4 1 5-.5" stroke="#c7574f" stroke-width="1.200" fill="none"/><ellipse cx="116" cy="141" rx="1.700" ry="2.600" fill="none" stroke="#d7a74a" stroke-width=".9"/><path d="M163 150c-4-18 0-56 10-70 8-10 26-11 34 0 8 12 8 36 6 50 0 10-4 22-10 28z" fill="#1b2036"/><path d="M147 186c0-28 8-52 26-58l26-1c16 4 24 26 25 59-10 2-20 2-28 0l-6-8c-14 2-28 6-43 9z" fill="#4d8ad0"/><path d="M178 129c5 3.500 13 3.500 18-1l-1-10h-16z" fill="#f6d9c6"/><path d="M171 104c0-14 7-22 17-22 9 0 15 7 15 18 0 12-6 22-15 22-9 0-17-8-17-18z" fill="#f6d9c6"/><path d="M168 110c-2-20 6-36 20-36 12 0 19 12 18 26-8-2-16-8-19-15-4 8-12 16-19 25z" fill="#1b2036"/><path d="M196 100c4 10 8 22 6 38l8 6c4-14 4-32-2-46z" fill="#1b2036"/><ellipse cx="196" cy="111" rx="3.300" ry="2.300" fill="#f2a596" stroke="none" opacity=".85"/><ellipse cx="176" cy="110" rx="2.500" ry="1.800" fill="#f2a596" stroke="none" opacity=".7"/><path d="M182 114c2 2.500 6 2.500 8-.5z" fill="#b9433f"/><path d="M177 100.500q2-1.500 4 0M189 99.500q2-1.500 4.500 0" stroke="#1b2036" stroke-width="1.100" fill="none"/><path d="M165 118c-5 10-4 26 3 36l9-8c-4-8-5-18-3-27z" fill="#1b2036"/><path d="M196 116c4 10 7 26 3 42l7 1c4-14 3-30-1-44z" fill="#1b2036"/><path transform="translate(0 7)" d="M202 132c-2-8-1-16 2-21l2 .5 1-4 2.500.5.500 4 2-3 2 1-1 5 2.500-2 1.500 1.500c-2 4-3 10-5 15z" fill="#f6d9c6" stroke="#3a2f3f" stroke-width=".5"/><path transform="translate(0 7)" d="M199 133c5-3 12-3 17 0l6 26-16 4z" fill="#4d8ad0"/><path d="M37 202C37 170 40 146 55 130L64 127 88 136C100 142 112 160 119 186L112 200 70 214Z" fill="#a9c0de"/><path d="M64 122L80 128 84 140 72 146 62 132Z" fill="#f6d9c6"/><path d="M57 131L75 155 84 139 79 132 70 140 62 128Z" fill="#fff"/><path d="M70 106L86 100C90 104 91.500 109 91.500 113L93.500 117.500 91.500 120C91.500 126 88.500 132 84 135 80 137 75 137 72 135L64 126 67 116Z" fill="#f6d9c6"/><ellipse cx="62.500" cy="122" rx="2.800" ry="3.800" fill="#f6d9c6" stroke="#3a2f3f" stroke-width=".4"/><path d="M59 126C52 121 48.500 110 52.500 101 56.500 93.500 68 91.500 80 93.500 84.500 95 87 98 87 100.500L83 104.500C78 105 74 106 71 107.500 69 110.500 68.500 114 68.500 117.500L65.500 118.500C64 117.500 61 118 60.500 121Z" fill="#1b2036"/><g fill="none" stroke="#1b2036" stroke-width="1.100"><rect x="79.500" y="111.500" width="6.500" height="6.500" rx="2.500"/><rect x="87.500" y="110.500" width="5" height="6.500" rx="2.200"/><path d="M79.500 114.500L65 118.500"/></g><ellipse cx="81" cy="123.500" rx="3" ry="2" fill="#f2a596" stroke="none" opacity=".75"/><path d="M86 127.500c1.500 1 3 .8 4-.3" stroke="#b9433f" stroke-width=".9" fill="none"/><path d="M60 178l44 2c4 0 6 3 6 7s-3 7-7 7l-46-2z" fill="#a9c0de"/><path d="M104 181c6-3 14-2 18 2 3 4 2 9-3 11-5 1-12 0-15-3z" fill="#f6d9c6" stroke="#3a2f3f" stroke-width=".5"/><path d="M144 172c4-2 10-2 12 1 1 3-2 6-6 6-4 1-8 0-8-3z" fill="#f6d9c6"/><path d="M156 182c4-4 12-6 18-3 3 2 3 6 0 8-5 2-12 1-16-1z" fill="#f6d9c6" stroke="#3a2f3f" stroke-width=".5"/><path d="M172 180l6 10" stroke="#1b2036" stroke-width="1.200"/><path d="M62 186l172-3 10 52H56z" fill="#fdfdfe"/><path d="M56 234h150l2 8H58z" fill="#8fb6e4"/><rect x="68" y="241" width="133" height="16" fill="#4d8ad0"/><rect x="96" y="257" width="100" height="17" fill="#fbfbfd"/><path d="M104 181c6-3 14-2 18 2 3 4 2 9-3 11-5 1-12 0-15-3z" fill="#f6d9c6" stroke="#3a2f3f" stroke-width=".5"/><path d="M60 180l44 1c4 0 6 3 6 7s-3 7-7 7l-44-2z" fill="#a9c0de"/><path d="M156 182c4-4 12-6 18-3 3 2 3 6 0 8-5 2-12 1-16-1z" fill="#f6d9c6" stroke="#3a2f3f" stroke-width=".5"/><path d="M172 181l5 9" stroke="#1b2036" stroke-width="1.200"/><path d="M125 198l16-13 28 8-14 16z" fill="#f5a623"/><path d="M131 188l14-6 12 6-12 8z" fill="#f7b84a"/><path d="M125 198l30 11 .5 2.500-31-11z" fill="#d98716"/><path d="M170 190l30-4 9 15-32 5z" fill="#fff" stroke="#9aa7c4" stroke-width=".5"/><path d="M176 192.500l20-3M177 195.500l21-3M178.500 198.500l21-3M180 201.500l18-3" stroke="#8e9bb8" stroke-width=".7"/><path d="M88 204l22-6 12 8-20 8z" fill="#fff" stroke="#9aa7c4" stroke-width=".5"/><path d="M95 205l14-3.500M98 208l14-3.500" stroke="#a9b4cc" stroke-width=".7"/><path d="M198 219l26-4 6 6-26 5z" fill="#fff" stroke="#9aa7c4" stroke-width=".5"/><ellipse cx="92.5" cy="221.5" rx="12.24" ry="3" fill="#c98f4e"/><path d="M84 209.5h17v7.15c0 6.5-17 6.5-17 0z" fill="#1d2a4d"/><ellipse cx="92.5" cy="209.5" rx="8.5" ry="2" fill="#f3f5fa"/><ellipse cx="171.0" cy="223.5" rx="11.52" ry="3" fill="#c98f4e"/><path d="M163 211.5h16v7.15c0 6.5-16 6.5-16 0z" fill="#1d2a4d"/><ellipse cx="171.0" cy="211.5" rx="8.0" ry="2" fill="#f3f5fa"/><path d="M204.5 199.5h11.5v6.6000000000000005c0 6.0-11.5 6.0-11.5 0z" fill="#1d2a4d"/><ellipse cx="210.25" cy="199.5" rx="5.75" ry="2" fill="#f3f5fa"/><ellipse cx="210" cy="211" rx="8" ry="2" fill="#c98f4e" opacity=".8"/><path d="M204.5 199.5h11.5v6.6000000000000005c0 6.0-11.5 6.0-11.5 0z" fill="#1d2a4d"/><ellipse cx="210.25" cy="199.5" rx="5.75" ry="2" fill="#f3f5fa"/><path d="M120 204.5h10.5v5.5c0 5.0-10.5 5.0-10.5 0z" fill="#5b9ae0"/><ellipse cx="125.25" cy="204.5" rx="5.25" ry="2" fill="#f3f5fa"/><path d="M155 200.5h14v7.700000000000001c0 7.0-14 7.0-14 0z" fill="#4d8ad0"/><ellipse cx="162.0" cy="200.5" rx="7.0" ry="2" fill="#f3f5fa"/><ellipse cx="162" cy="201" rx="5.500" ry="1.800" fill="#1d2a4d"/><path d="M216.5 190.5h10.5v5.5c0 5.0-10.5 5.0-10.5 0z" fill="#8db4e2"/><ellipse cx="221.75" cy="190.5" rx="5.25" ry="2" fill="#f3f5fa"/><path d="M187.5 176.0h9.5v5.5c0 5.0-9.5 5.0-9.5 0z" fill="#e9eff8"/><ellipse cx="192.25" cy="176.0" rx="4.75" ry="2" fill="#f3f5fa"/><path d="M29 226c-2-14 4-28 16-31l14 1c6 6 10 10 14 12l10 3-4 12-14 4-10 8z" fill="#4d8ad0"/><path d="M73 207c2-3 6-5 9-4 3 1 4 5 2 8l-6 3z" fill="#f6d9c6"/><ellipse cx="56" cy="181" rx="11" ry="12" fill="#f6d9c6"/><path d="M36 186c-2-14 4-26 16-27 8 0 14 4 15 10-4 0-8 2-10 6 0 6-2 12-6 18-6 0-12-2-15-7z" fill="#1b2036"/><ellipse cx="61" cy="186" rx="3" ry="2.200" fill="#f2a596" stroke="none" opacity=".85"/><path d="M0 224c4-14 14-24 28-24l14 8 4 18-20 6z" fill="#4d8ad0"/><path d="M0 142c6-8 20-8 28-2 8 6 10 18 8 30-1 14-4 26-10 36-4 4-10 6-16 4l-10-2z" fill="#1b2036"/><path d="M30 168c4 2 6 8 5 14-1 8-4 16-9 22l-4-6c4-10 6-20 8-30z" fill="#f6d9c6"/><path d="M0 228c12-8 34-10 50-4 16 8 30 24 38 42l2 8H0z" fill="#ab9097"/><path d="M8 240c14 2 30 10 40 24M30 232c10 6 22 18 30 34M0 256c10 0 24 6 32 18" stroke="#8a6f7a" stroke-width=".7" fill="none"/><path d="M74 254c3-6 10-8 15-5 4 3 6 9 4 14l-13 3z" fill="#f6d9c6" stroke="#3a2f3f" stroke-width=".5"/><path d="M74 258c6-2 16 0 20 6l1 10H72z" fill="#ab9097"/><path d="M186 274c2-20 10-38 24-46l18-16c6-10 16-16 30-16h20c6 2 10 6 12 12v66z" fill="#a8919a"/><path d="M228 212c10 8 24 12 40 8l22-10M214 240c-6 10-10 22-12 34M258 226c-2 16-2 32 0 48" stroke="#846b78" stroke-width=".8" fill="none"/><path d="M222 176c2-10 8-14 14-12l6 28c0 6-2 12-6 14l-8 6c-4-10-6-24-6-36z" fill="#f6d9c6"/><path transform="translate(0 4)" d="M227 178c-2-16 8-26 22-26 8 0 14 4 18 8 4-4 12-6 18-2 6 4 7 14 3 20-3 6-10 8-16 6-4 12-12 20-24 22-8 0-14-6-16-14-3-4-5-8-5-14z" fill="#1b2036"/><path d="M223 183l7-1.500v6l-7 1z" fill="none" stroke="#1b2036" stroke-width="1"/><path d="M202 232c2-6 8-10 14-10 4 0 8 2 10 6l-8 10-14 4z" fill="#f6d9c6" stroke="#3a2f3f" stroke-width=".5"/><path d="M212 206c4-3 10-3 14 0l2 4-14 2z" fill="#f6d9c6"/><path d="M99 269c6-4 30-4 37 0v5H99z" fill="#e8501f"/><path d="M104 252c0-8 6-14 14-14 6 0 10 2 14 6l6-8 3 2-5 12c0 8-2 14-6 18h-24z" fill="#1f3f7a"/><rect x="102" y="251" width="19" height="19" rx="5" fill="#3f78c4"/><rect x="105" y="259" width="13" height="7" rx="2" fill="#356ab3"/><circle cx="118" cy="236" r="8.500" fill="#e8491d"/><path d="M124 230c3 2 4 6 3 10l-5 2z" fill="#f6d9c6"/><circle cx="115.500" cy="226" r="6" fill="#1b2036"/><rect x="126" y="228" width="3" height="3" fill="#4fbfa0"/><path d="M96 262l4-7h52l-4 19H96z" fill="none" stroke="#c9d2e4" stroke-width=".6"/></g></svg>
<div class="abs" style="left:13.0px;top:67.5px;width:11.5px;height:13.0px;background:#f4f4f6;border-radius:3px;box-shadow:0 0 1px rgba(0,0,0,.4)"></div>
<div class="abs tn" style="left:16.7px;top:69.5px">1</div>
<div class="abs" style="left:53.5px;top:67px;width:31.6px;height:0.8px;background:#8a8a92;opacity:0.41"></div>
<div class="abs" style="left:53.5px;top:68.6px;width:34.9px;height:0.8px;background:#8a8a92;opacity:0.42"></div>
<div class="abs" style="left:53.5px;top:70.2px;width:41.5px;height:0.8px;background:#8a8a92;opacity:0.31"></div>
<div class="abs" style="left:53.5px;top:71.8px;width:25.8px;height:0.8px;background:#8a8a92;opacity:0.47"></div>
<div class="abs" style="left:53.5px;top:74px;width:24.1px;height:0.8px;background:#8a8a92;opacity:0.22"></div>
<div class="abs" style="left:53.5px;top:75.6px;width:27.2px;height:0.8px;background:#8a8a92;opacity:0.23"></div>
<div class="abs" style="left:10.0px;top:86.5px;width:102.0px;height:180.5px;background:#fff;border:1.200px solid #7fa9dd;border-radius:3px"></div>
<div class="abs" style="left:16.5px;top:92px;font-size:2.600px;font-weight:bold;color:#333;white-space:nowrap">Слайд 2. Повестка дня</div>
<div class="abs" style="left:16.5px;top:98.5px;width:1.5px;height:1.5px;background:#e79aa0;border-radius:1px"></div>
<div class="abs" style="left:19.5px;top:98.8px;width:36px;height:0.9px;background:#77777f;opacity:.65"></div>
<div class="abs" style="left:16.5px;top:98.5px;width:1.5px;height:1.5px;background:#e79aa0;border-radius:1px"></div>
<div class="abs" style="left:64.5px;top:98.8px;width:20px;height:0.9px;background:#77777f;opacity:.65"></div>
<div class="abs" style="left:16.5px;top:105.5px;width:1.5px;height:1.5px;background:#e79aa0;border-radius:1px"></div>
<div class="abs" style="left:19.5px;top:105.8px;width:40px;height:0.9px;background:#77777f;opacity:.65"></div>
<div class="abs" style="left:16.5px;top:105.5px;width:1.5px;height:1.5px;background:#e79aa0;border-radius:1px"></div>
<div class="abs" style="left:64.5px;top:105.8px;width:8px;height:0.9px;background:#77777f;opacity:.65"></div>
<div class="abs" style="left:61.5px;top:98.5px;width:1.5px;height:1.5px;background:#e79aa0;border-radius:1px"></div>
<div class="abs" style="left:61.5px;top:105.5px;width:1.5px;height:1.5px;background:#e79aa0;border-radius:1px"></div>
<div class="abs" style="left:17.5px;top:112px;width:65.43px;height:0.9px;background:#7f7f8c;opacity:0.26"></div>
<div class="abs" style="left:16.5px;top:113.75px;width:61.61px;height:0.9px;background:#8a8090;opacity:0.18"></div>
<div class="abs" style="left:16.5px;top:115.5px;width:64.28px;height:0.9px;background:#7f7f8c;opacity:0.22"></div>
<div class="abs" style="left:19.5px;top:117.25px;width:49.46px;height:0.9px;background:#8a8090;opacity:0.22"></div>
<div class="abs" style="left:19.5px;top:119.0px;width:38.63px;height:0.9px;background:#7f7f8c;opacity:0.31"></div>
<div class="abs" style="left:21.5px;top:120.75px;width:62px;height:0.9px;background:#858592;opacity:0.31"></div>
<div class="abs" style="left:16.5px;top:122.5px;width:66.28px;height:0.9px;background:#7f7f8c;opacity:0.17"></div>
<div class="abs" style="left:17.5px;top:124.25px;width:49.49px;height:0.9px;background:#8a8090;opacity:0.30"></div>
<div class="abs" style="left:17.5px;top:126.0px;width:53.74px;height:0.9px;background:#7f7f8c;opacity:0.34"></div>
<div class="abs" style="left:21.5px;top:127.75px;width:54.07px;height:0.9px;background:#7f7f8c;opacity:0.21"></div>
<div class="abs" style="left:21.5px;top:129.5px;width:58.32px;height:0.9px;background:#8a8090;opacity:0.31"></div>
<div class="abs" style="left:16.5px;top:131.25px;width:51.82px;height:0.9px;background:#858592;opacity:0.30"></div>
<div class="abs" style="left:19.5px;top:133.0px;width:54.5px;height:0.9px;background:#858592;opacity:0.28"></div>
<div class="abs" style="left:16.5px;top:134.75px;width:60.8px;height:0.9px;background:#7f7f8c;opacity:0.34"></div>
<div class="abs" style="left:16.5px;top:136.5px;width:54.17px;height:0.9px;background:#858592;opacity:0.30"></div>
<div class="abs" style="left:19.5px;top:138.25px;width:45.53px;height:0.9px;background:#7f7f8c;opacity:0.41"></div>
<div class="abs" style="left:21.5px;top:140.0px;width:49.46px;height:0.9px;background:#7f7f8c;opacity:0.36"></div>
<div class="abs" style="left:19.5px;top:141.75px;width:49.56px;height:0.9px;background:#7f7f8c;opacity:0.41"></div>
<div class="abs" style="left:21.5px;top:143.5px;width:54.13px;height:0.9px;background:#858592;opacity:0.39"></div>
<div class="abs" style="left:17.5px;top:145.25px;width:57.81px;height:0.9px;background:#8a8090;opacity:0.31"></div>
<div class="abs" style="left:19.5px;top:151px;width:44.15px;height:0.9px;background:#858592;opacity:0.18"></div>
<div class="abs" style="left:19.5px;top:152.75px;width:65.64px;height:0.9px;background:#8a8090;opacity:0.18"></div>
<div class="abs" style="left:17.5px;top:154.5px;width:63.93px;height:0.9px;background:#858592;opacity:0.42"></div>
<div class="abs" style="left:17.5px;top:156.25px;width:66.31px;height:0.9px;background:#858592;opacity:0.39"></div>
<div class="abs" style="left:16.5px;top:158.0px;width:73.97px;height:0.9px;background:#8a8090;opacity:0.25"></div>
<div class="abs" style="left:16.5px;top:159.75px;width:58.68px;height:0.9px;background:#858592;opacity:0.22"></div>
<div class="abs" style="left:16.5px;top:161.5px;width:67.05px;height:0.9px;background:#858592;opacity:0.26"></div>
<div class="abs" style="left:16.5px;top:163.25px;width:47.49px;height:0.9px;background:#858592;opacity:0.26"></div>
<div class="abs" style="left:16.5px;top:165.0px;width:69.82px;height:0.9px;background:#858592;opacity:0.38"></div>
<div class="abs" style="left:19.5px;top:166.75px;width:73px;height:0.9px;background:#858592;opacity:0.34"></div>
<div class="abs" style="left:16.5px;top:168.5px;width:46.96px;height:0.9px;background:#7f7f8c;opacity:0.21"></div>
<div class="abs" style="left:16.5px;top:170.25px;width:42.21px;height:0.9px;background:#7f7f8c;opacity:0.38"></div>
<div class="abs" style="left:17.5px;top:172.0px;width:51.44px;height:0.9px;background:#8a8090;opacity:0.20"></div>
<div class="abs" style="left:17.5px;top:173.75px;width:62.66px;height:0.9px;background:#7f7f8c;opacity:0.24"></div>
<div class="abs" style="left:21.5px;top:177px;width:33px;height:0.9px;background:#8a8090;opacity:0.33"></div>
<div class="abs" style="left:16.5px;top:178.75px;width:28.71px;height:0.9px;background:#8a8090;opacity:0.39"></div>
<div class="abs" style="left:21.5px;top:180.5px;width:27.61px;height:0.9px;background:#7f7f8c;opacity:0.26"></div>
<div class="abs" style="left:19.5px;top:182.25px;width:31.75px;height:0.9px;background:#7f7f8c;opacity:0.18"></div>
<div class="abs" style="left:16.5px;top:185px;width:56.87px;height:0.9px;background:#8a8090;opacity:0.19"></div>
<div class="abs" style="left:16.5px;top:186.75px;width:45.3px;height:0.9px;background:#8a8090;opacity:0.31"></div>
<div class="abs" style="left:16.5px;top:188.5px;width:74.25px;height:0.9px;background:#7f7f8c;opacity:0.32"></div>
<div class="abs" style="left:16.5px;top:190.25px;width:62.8px;height:0.9px;background:#858592;opacity:0.20"></div>
<div class="abs" style="left:17.5px;top:192.0px;width:62.4px;height:0.9px;background:#7f7f8c;opacity:0.28"></div>
<div class="abs" style="left:19.5px;top:193.75px;width:73px;height:0.9px;background:#858592;opacity:0.28"></div>
<div class="abs" style="left:17.5px;top:195.5px;width:44.74px;height:0.9px;background:#858592;opacity:0.19"></div>
<div class="abs" style="left:17.5px;top:197.25px;width:58.17px;height:0.9px;background:#8a8090;opacity:0.34"></div>
<div class="abs" style="left:16.5px;top:199.0px;width:48.82px;height:0.9px;background:#858592;opacity:0.41"></div>
<div class="abs" style="left:16.5px;top:200.75px;width:65.4px;height:0.9px;background:#8a8090;opacity:0.40"></div>
<div class="abs" style="left:17.5px;top:202.5px;width:75px;height:0.9px;background:#8a8090;opacity:0.38"></div>
<div class="abs" style="left:17.5px;top:204.25px;width:59.53px;height:0.9px;background:#858592;opacity:0.40"></div>
<div class="abs" style="left:16.5px;top:206.0px;width:60.01px;height:0.9px;background:#858592;opacity:0.36"></div>
<div class="abs" style="left:16.5px;top:207.75px;width:62.77px;height:0.9px;background:#7f7f8c;opacity:0.36"></div>
<div class="abs" style="left:16.5px;top:209.5px;width:69.79px;height:0.9px;background:#7f7f8c;opacity:0.35"></div>
<div class="abs" style="left:16.5px;top:213px;width:59.5px;height:0.9px;background:#7f7f8c;opacity:0.25"></div>
<div class="abs" style="left:16.5px;top:214.75px;width:68.82px;height:0.9px;background:#7f7f8c;opacity:0.28"></div>
<div class="abs" style="left:21.5px;top:216.5px;width:71px;height:0.9px;background:#8a8090;opacity:0.28"></div>
<div class="abs" style="left:17.5px;top:218.25px;width:74.46px;height:0.9px;background:#7f7f8c;opacity:0.25"></div>
<div class="abs" style="left:16.5px;top:220.0px;width:49.56px;height:0.9px;background:#7f7f8c;opacity:0.21"></div>
<div class="abs" style="left:19.5px;top:221.75px;width:63.14px;height:0.9px;background:#7f7f8c;opacity:0.39"></div>
<div class="abs" style="left:19.5px;top:223.5px;width:72.89px;height:0.9px;background:#8a8090;opacity:0.25"></div>
<div class="abs" style="left:16.5px;top:225.25px;width:70.34px;height:0.9px;background:#858592;opacity:0.19"></div>
<div class="abs" style="left:16.5px;top:227.0px;width:58.15px;height:0.9px;background:#8a8090;opacity:0.21"></div>
<div class="abs" style="left:17.5px;top:228.75px;width:44.77px;height:0.9px;background:#8a8090;opacity:0.41"></div>
<div class="abs" style="left:19.5px;top:230.5px;width:57.64px;height:0.9px;background:#7f7f8c;opacity:0.35"></div>
<div class="abs" style="left:16.5px;top:232.25px;width:47.61px;height:0.9px;background:#7f7f8c;opacity:0.19"></div>
<div class="abs" style="left:21.5px;top:234.0px;width:71px;height:0.9px;background:#7f7f8c;opacity:0.37"></div>
<div class="abs" style="left:21.5px;top:235.75px;width:70.07px;height:0.9px;background:#8a8090;opacity:0.41"></div>
<div class="abs" style="left:17.5px;top:237.5px;width:47.13px;height:0.9px;background:#7f7f8c;opacity:0.30"></div>
<div class="abs" style="left:16.5px;top:239.25px;width:69.14px;height:0.9px;background:#7f7f8c;opacity:0.35"></div>
<div class="abs" style="left:21.5px;top:241.0px;width:67.43px;height:0.9px;background:#7f7f8c;opacity:0.20"></div>
<div class="abs" style="left:16.5px;top:242.75px;width:42.76px;height:0.9px;background:#8a8090;opacity:0.22"></div>
<div class="abs" style="left:16.5px;top:244.5px;width:67.92px;height:0.9px;background:#8a8090;opacity:0.24"></div>
<div class="abs" style="left:19.5px;top:246.25px;width:70.33px;height:0.9px;background:#8a8090;opacity:0.18"></div>
<div class="abs" style="left:17.5px;top:248.0px;width:72.5px;height:0.9px;background:#8a8090;opacity:0.33"></div>
<div class="abs" style="left:19.5px;top:249.75px;width:70.09px;height:0.9px;background:#7f7f8c;opacity:0.39"></div>
<div class="abs" style="left:25.5px;top:259px;width:49.4px;height:0.8px;background:#9a90a8;opacity:0.31"></div>
<div class="abs" style="left:25.5px;top:260.8px;width:65.4px;height:0.8px;background:#9a90a8;opacity:0.29"></div>
<div class="abs" style="left:25.5px;top:262.6px;width:51.3px;height:0.8px;background:#9a90a8;opacity:0.32"></div>
<div class="abs" style="left:25.5px;top:264.4px;width:40.3px;height:0.8px;background:#9a90a8;opacity:0.30"></div>
<div class="abs" style="left:13.0px;top:248.5px;width:11.5px;height:13.5px;background:#f4f4f6;border-radius:3px;box-shadow:0 0 1px rgba(0,0,0,.4)"></div>
<div class="abs tn" style="left:16.5px;top:251px">2</div>
<div class="abs" style="left:10.5px;top:271px;width:101px;height:40px;background:#fff;border-radius:3px;box-shadow:0 0 1px rgba(0,0,0,.15)"></div>
<div class="abs" style="left:16.5px;top:278px;font-size:2.600px;font-weight:bold;color:#333;white-space:nowrap">Слайд 3. Статистика и факты</div>
<div class="abs" style="left:16.5px;top:286px;width:22px;height:1.2px;background:#555;opacity:.7"></div>
<div class="abs" style="left:62.5px;top:286px;width:22px;height:1.2px;background:#555;opacity:.7"></div>
<div class="abs" style="left:17.5px;top:290px;width:14.7px;height:0.8px;background:#8a8a92;opacity:0.39"></div>
<div class="abs" style="left:17.5px;top:291.8px;width:18.8px;height:0.8px;background:#8a8a92;opacity:0.35"></div>
<div class="abs" style="left:17.5px;top:293.6px;width:15.1px;height:0.8px;background:#8a8a92;opacity:0.41"></div>
<div class="abs" style="left:63.5px;top:290px;width:32.4px;height:0.8px;background:#8a8a92;opacity:0.28"></div>
<div class="abs" style="left:63.5px;top:291.8px;width:20.1px;height:0.8px;background:#8a8a92;opacity:0.45"></div>
<div class="abs" style="left:63.5px;top:293.6px;width:22.2px;height:0.8px;background:#8a8a92;opacity:0.27"></div>
<div class="abs" style="left:25.5px;top:296px;width:28.1px;height:0.8px;background:#8a8a92;opacity:0.39"></div>
<div class="abs" style="left:25.5px;top:297.8px;width:27.8px;height:0.8px;background:#8a8a92;opacity:0.22"></div>
<div class="abs" style="left:25.5px;top:299.6px;width:24.3px;height:0.8px;background:#8a8a92;opacity:0.28"></div>
<div class="abs" style="left:13.0px;top:293.5px;width:11.5px;height:13.5px;background:#f4f4f6;border-radius:3px;box-shadow:0 0 1px rgba(0,0,0,.4)"></div>
<div class="abs tn" style="left:16.5px;top:296px">3</div>
<div class="abs" style="left:10.5px;top:316px;width:101px;height:41px;background:#fff;border-radius:3px;box-shadow:0 0 1px rgba(0,0,0,.15)"></div>
<div class="abs" style="left:16.5px;top:322px;font-size:2.600px;font-weight:bold;color:#333;white-space:nowrap">Слайд 4. Причины правонарушений</div>
<div class="abs" style="left:16.5px;top:328px;width:43px;height:7px;background:#fff;border:.6px solid #dcdce4"></div>
<div class="abs" style="left:16.5px;top:328px;width:1.8px;height:7px;background:#2343b8"></div>
<div class="abs" style="left:20.5px;top:330px;width:26.36px;height:1px;background:#444;opacity:.6"></div>
<div class="abs" style="left:20.5px;top:332px;width:11.3px;height:1px;background:#444;opacity:.4"></div>
<div class="abs" style="left:61.5px;top:328px;width:43px;height:7px;background:#fff;border:.6px solid #dcdce4"></div>
<div class="abs" style="left:61.5px;top:328px;width:1.8px;height:7px;background:#2343b8"></div>
<div class="abs" style="left:65.5px;top:330px;width:22.3px;height:1px;background:#444;opacity:.6"></div>
<div class="abs" style="left:65.5px;top:332px;width:14.45px;height:1px;background:#444;opacity:.4"></div>
<div class="abs" style="left:16.5px;top:339px;width:43px;height:7px;background:#fff;border:.6px solid #dcdce4"></div>
<div class="abs" style="left:16.5px;top:339px;width:1.8px;height:7px;background:#2343b8"></div>
<div class="abs" style="left:20.5px;top:341px;width:22.65px;height:1px;background:#444;opacity:.6"></div>
<div class="abs" style="left:20.5px;top:343px;width:14.55px;height:1px;background:#444;opacity:.4"></div>
<div class="abs" style="left:61.5px;top:339px;width:43px;height:7px;background:#fff;border:.6px solid #dcdce4"></div>
<div class="abs" style="left:61.5px;top:339px;width:1.8px;height:7px;background:#2343b8"></div>
<div class="abs" style="left:65.5px;top:341px;width:20.3px;height:1px;background:#444;opacity:.6"></div>
<div class="abs" style="left:65.5px;top:343px;width:10.86px;height:1px;background:#444;opacity:.4"></div>
<div class="abs" style="left:20.5px;top:349px;width:19.4px;height:0.8px;background:#8a8a92;opacity:0.22"></div>
<div class="abs" style="left:20.5px;top:350.8px;width:24.2px;height:0.8px;background:#8a8a92;opacity:0.34"></div>
<div class="abs" style="left:13.0px;top:339px;width:11.5px;height:13.5px;background:#f4f4f6;border-radius:3px;box-shadow:0 0 1px rgba(0,0,0,.4)"></div>
<div class="abs tn" style="left:16.5px;top:341.5px">4</div>
<div class="abs" style="left:10.5px;top:362px;width:101px;height:62px;background:#fff;border-radius:3px;box-shadow:0 0 1px rgba(0,0,0,.15)"></div>
<div class="abs" style="left:16.5px;top:366.5px;font-size:2.600px;font-weight:bold;color:#333;white-space:nowrap">Слайд 5. Опыт и законы</div>
<div class="abs" style="left:16.5px;top:371px;width:28px;height:18px;background:#eeebec"></div>
<div class="abs" style="left:18.0px;top:373px;width:4.5px;height:4.5px;background:#2456c8;border-radius:50%"></div>
<div class="abs" style="left:18.5px;top:380px;width:18px;height:1px;background:#555;opacity:.5"></div>
<div class="abs" style="left:47.5px;top:371px;width:28px;height:18px;background:#eeebec"></div>
<div class="abs" style="left:49.0px;top:373px;width:4.5px;height:4.5px;background:#2456c8;border-radius:50%"></div>
<div class="abs" style="left:49.5px;top:380px;width:18px;height:1px;background:#555;opacity:.5"></div>
<div class="abs" style="left:77.5px;top:371px;width:28px;height:18px;background:#eeebec"></div>
<div class="abs" style="left:79.0px;top:373px;width:4.5px;height:4.5px;background:#2456c8;border-radius:50%"></div>
<div class="abs" style="left:79.5px;top:380px;width:18px;height:1px;background:#555;opacity:.5"></div>
<div class="abs" style="left:16.5px;top:396px;width:18.1px;height:0.8px;background:#8a8a92;opacity:0.35"></div>
<div class="abs" style="left:16.5px;top:397.8px;width:16.0px;height:0.8px;background:#8a8a92;opacity:0.48"></div>
<div class="abs" style="left:58.5px;top:403px;width:25.1px;height:0.9px;background:#55555c;opacity:0.36"></div>
<div class="abs" style="left:58.5px;top:404.7px;width:18.1px;height:0.9px;background:#55555c;opacity:0.43"></div>
<div class="abs" style="left:58.5px;top:406.4px;width:26.9px;height:0.9px;background:#55555c;opacity:0.59"></div>
<div class="abs" style="left:58.5px;top:408.1px;width:29.9px;height:0.9px;background:#55555c;opacity:0.38"></div>
<div class="abs" style="left:58.5px;top:409.8px;width:20.9px;height:0.9px;background:#55555c;opacity:0.36"></div>
<div class="abs" style="left:58.5px;top:411.5px;width:17.0px;height:0.9px;background:#55555c;opacity:0.53"></div>
<div class="abs" style="left:58.5px;top:413.2px;width:13.3px;height:0.9px;background:#55555c;opacity:0.42"></div>
<div class="abs" style="left:58.5px;top:414.9px;width:25.3px;height:0.9px;background:#55555c;opacity:0.54"></div>
<div class="abs" style="left:58.5px;top:416.6px;width:17.0px;height:0.9px;background:#55555c;opacity:0.56"></div>
<div class="abs" style="left:16.5px;top:409px;width:9.3px;height:0.8px;background:#9aa09a;opacity:0.34"></div>
<div class="abs" style="left:16.5px;top:410.8px;width:10.3px;height:0.8px;background:#9aa09a;opacity:0.29"></div>
<div class="abs" style="left:16.5px;top:412.6px;width:15.0px;height:0.8px;background:#9aa09a;opacity:0.36"></div>
<div class="abs" style="left:16.5px;top:414.4px;width:13.1px;height:0.8px;background:#9aa09a;opacity:0.30"></div>
<div class="abs" style="left:16.5px;top:416.2px;width:9.2px;height:0.8px;background:#9aa09a;opacity:0.29"></div>
<div class="abs" style="left:58.5px;top:402px;width:52px;height:0.6px;background:#e8d9a8"></div>
<div class="abs" style="left:13.0px;top:407.5px;width:11.5px;height:13.5px;background:#f4f4f6;border-radius:3px;box-shadow:0 0 1px rgba(0,0,0,.4)"></div>
<div class="abs tn" style="left:16.5px;top:410px">5</div>
<div class="abs" style="left:163px;top:21px;width:773px;height:289px;background:#fff"></div>
<svg id="ill" class="abs" style="left:163px;top:35px" width="290" height="274.700" viewBox="0 0 290 274" preserveAspectRatio="none"><rect width="290" height="274" fill="#fdfdfe"/><rect x="56" y="1" width="234" height="1.500" fill="#56688f"/><rect x="66" y="9.500" width="224" height="4" fill="#8a8ca6"/><rect x="59" y="7" width="3" height="80" fill="#6fa0d8"/><rect x="62" y="9" width="7" height="125" fill="#fff"/><rect x="66.500" y="9.500" width="2.500" height="125" fill="#8a8ca6"/><rect x="69" y="13" width="221" height="127" fill="#5d96d2"/><rect x="69" y="138" width="221" height="9" fill="#a9c9ee"/><rect x="69" y="146" width="221" height="3" fill="#4f86c9"/><text x="79" y="31" font-family="Liberation Serif,DejaVu Serif,serif" font-style="italic" font-size="11.500" fill="#f4f8fd" textLength="84" lengthAdjust="spacingAndGlyphs">jns chiled safe.t</text><g transform="translate(-3 0)"><rect x="82" y="39.5" width="6.500" height="6.500" fill="none" stroke="#eaf2fc" stroke-width=".9"/><path d="M93 43h20" stroke="#dbe8f8" stroke-width=".9"/><path d="M83 61l2.500-7 2.500 7z" fill="none" stroke="#eaf2fc" stroke-width=".8"/><path d="M93 59h20" stroke="#dbe8f8" stroke-width=".9"/><rect x="82.500" y="64" width="6" height="3.500" fill="none" stroke="#eaf2fc" stroke-width=".8"/><path d="M93 66h20" stroke="#dbe8f8" stroke-width=".9"/><path d="M81.500 73h8l-4 5.500z" fill="none" stroke="#eaf2fc" stroke-width=".9"/><path d="M93 76h20" stroke="#dbe8f8" stroke-width=".9"/><circle cx="85.500" cy="84" r="2.800" fill="none" stroke="#eaf2fc" stroke-width=".9"/><path d="M93 84h20" stroke="#dbe8f8" stroke-width=".9"/><circle cx="85.500" cy="95" r="2.800" fill="none" stroke="#eaf2fc" stroke-width=".9"/><path d="M93 95h11" stroke="#dbe8f8" stroke-width=".9"/><path d="M93 47h15" stroke="#dbe8f8" stroke-width=".9"/></g><rect x="117.500" y="39" width="42" height="45.500" fill="#fff"/><rect x="196" y="38" width="35" height="37" fill="#fff"/><g fill="none" stroke="#eef4fc" stroke-width=".9"><circle cx="177" cy="37" r="8"/><path d="M169 37h16M177 29v16M171 31.500c4 3 8 3 12 0M171 42.500c4-3 8-3 12 0M174 29.500c-2 5-2 10 0 15M180 29.500c2 5 2 10 0 15"/><path d="M185 32l6-4M186 34.500l3.500-1"/></g><rect x="238" y="21" width="24" height="6.500" rx="1" fill="#f3a22c"/><path d="M238 31h28M238 34.500h31" stroke="#c8dcf4" stroke-width="1.100"/><rect x="238" y="39.500" width="31.500" height="8" rx="1" fill="#f5811f"/><path d="M238 51h27M238 54.500h30" stroke="#c8dcf4" stroke-width="1.100"/><rect x="240" y="59" width="5" height="6" fill="#f7c948"/><rect x="247" y="59.500" width="19" height="5.500" rx="1" fill="#f3a22c"/><circle cx="241.500" cy="72" r="3.300" fill="none" stroke="#e6effa" stroke-width=".9"/><path d="M248 68.500h30M248 72h28M248 75.500h24" stroke="#c8dcf4" stroke-width="1.100"/><rect x="280" y="20" width="10" height="19.500" fill="#fff"/><path d="M283 25h6M283 29h6" stroke="#c9cfdc" stroke-width=".7"/><rect x="280" y="43" width="10" height="18" fill="#fff"/><path d="M283 56l2 2 4-4.500" fill="none" stroke="#8d9ab8" stroke-width="1"/><rect x="218.500" y="89.500" width="10" height="10.500" fill="#fff"/><rect x="222" y="92" width="3" height="4" fill="#f3a22c"/><rect x="235.500" y="80.500" width="30" height="25.500" fill="#fff"/><path d="M241 87.500h10" stroke="#7a86a8" stroke-width=".9"/><rect x="271.500" y="80.500" width="18.500" height="25.500" fill="#fff"/><path d="M270.500 110h10.500l2.500 2.500v11.500h-13z" fill="#fff"/><ellipse cx="21.500" cy="26" rx="12" ry="15" fill="#1b2036"/><ellipse cx="23.500" cy="26" rx="10" ry="13.500" fill="#fff" stroke="#1b2036" stroke-width="1.200"/><path d="M23.500 27L26.500 13a10 13 0 0 1 6 5.500z" fill="#ee4f2a"/><path d="M27 20l-6.500 11" stroke="#1b2036" stroke-width="1.200"/><rect x="1.500" y="44" width="9.500" height="29" fill="#fff" stroke="#7d88a4" stroke-width=".8"/><path d="M4 52h5M4 60h4M4 66h5" stroke="#9aa7c4" stroke-width=".7"/><rect x="1.500" y="80.500" width="12" height="25.500" fill="#fff" stroke="#6f7c9c" stroke-width=".9"/><path d="M4 86h6M4 91h7M4 96h5M4 101h7" stroke="#7f8eb3" stroke-width=".8"/><g fill="#1d4288"><path d="M35 128c-1-18 0-32 3-45l1.500.3c-3 13-3.500 27-2.500 44.700z"/><ellipse cx="32" cy="84" rx="5" ry="9" transform="rotate(-25 32 84)"/><ellipse cx="44" cy="80" rx="5.500" ry="9" transform="rotate(20 44 80)"/><ellipse cx="54" cy="78" rx="5" ry="9" transform="rotate(50 54 78)"/><ellipse cx="58" cy="92" rx="5" ry="9" transform="rotate(75 58 92)"/><ellipse cx="50" cy="103" rx="5" ry="10" transform="rotate(40 50 103)"/><ellipse cx="24" cy="112" rx="5.500" ry="10" transform="rotate(-60 24 112)"/><ellipse cx="33" cy="120" rx="5" ry="9" transform="rotate(-15 33 120)"/><ellipse cx="44" cy="118" rx="5" ry="10" transform="rotate(35 44 118)"/><ellipse cx="52" cy="122" rx="4.500" ry="8" transform="rotate(70 52 122)"/></g><rect x="20" y="128" width="22" height="4.500" fill="#1f4b94"/><rect x="14" y="132.500" width="30" height="3" fill="#e8e8ef"/><rect x="16" y="135.500" width="27" height="3" fill="#e6a3a8"/><path d="M279 146h11v4h-8v12h-3z" fill="#e8b98a"/><g stroke="#262b47" stroke-width=".55" stroke-linejoin="round"><g transform="translate(0 3)"><path d="M222 186c3-22 12-36 24-41l14-2c9 3 15 10 18 22l2 20z" fill="#4d8ad0"/><path d="M243 146l6 8 5-9z" fill="#fff"/><ellipse cx="246" cy="127" rx="10" ry="12" fill="#f6d9c6"/><path d="M236 122c-1-8 6-14 15-14 11 0 19 7 19 17 0 6-3 12-6 14l-4-1c1-6-1-12-5-15-6 0-13 0-19-1z" fill="#1b2036"/><path d="M260 136c2 6 4 12 3 20l-4 1c0-8-1-14-3-20z" fill="#1b2036"/><ellipse cx="242.500" cy="131" rx="2.500" ry="1.800" fill="#f2a596" stroke="none" opacity=".8"/></g><path d="M104 150c0-10 4-40 13-53 6-6 19-6 25 0 5 8 4 22 2 32l-10 22z" fill="#1b2036"/><path d="M104 182c-1-18 2-36 14-42l20 0c8 4 12 14 12 30l-2 12z" fill="#a59392"/><path d="M118 141c4 4 14 4 19 0l-1-6h-17z" fill="#b7a5a3"/><ellipse cx="131" cy="116" rx="11" ry="13" fill="#f6d9c6"/><path d="M117 118c0-14 6-21 15-21 7 0 12 6 12 13-6-1-14-4-18-8-1 6-4 11-9 16z" fill="#1b2036"/><ellipse cx="125" cy="122" rx="2.600" ry="1.800" fill="#f2a596" stroke="none" opacity=".8"/><ellipse cx="138" cy="121" rx="2.300" ry="1.600" fill="#f2a596" stroke="none" opacity=".8"/><path d="M129.500 125.500c2 1.500 4 1 5-.5" stroke="#c7574f" stroke-width="1.200" fill="none"/><ellipse cx="116" cy="141" rx="1.700" ry="2.600" fill="none" stroke="#d7a74a" stroke-width=".9"/><path d="M163 150c-4-18 0-56 10-70 8-10 26-11 34 0 8 12 8 36 6 50 0 10-4 22-10 28z" fill="#1b2036"/><path d="M147 186c0-28 8-52 26-58l26-1c16 4 24 26 25 59-10 2-20 2-28 0l-6-8c-14 2-28 6-43 9z" fill="#4d8ad0"/><path d="M178 129c5 3.500 13 3.500 18-1l-1-10h-16z" fill="#f6d9c6"/><path d="M171 104c0-14 7-22 17-22 9 0 15 7 15 18 0 12-6 22-15 22-9 0-17-8-17-18z" fill="#f6d9c6"/><path d="M168 110c-2-20 6-36 20-36 12 0 19 12 18 26-8-2-16-8-19-15-4 8-12 16-19 25z" fill="#1b2036"/><path d="M196 100c4 10 8 22 6 38l8 6c4-14 4-32-2-46z" fill="#1b2036"/><ellipse cx="196" cy="111" rx="3.300" ry="2.300" fill="#f2a596" stroke="none" opacity=".85"/><ellipse cx="176" cy="110" rx="2.500" ry="1.800" fill="#f2a596" stroke="none" opacity=".7"/><path d="M182 114c2 2.500 6 2.500 8-.5z" fill="#b9433f"/><path d="M177 100.500q2-1.500 4 0M189 99.500q2-1.500 4.500 0" stroke="#1b2036" stroke-width="1.100" fill="none"/><path d="M165 118c-5 10-4 26 3 36l9-8c-4-8-5-18-3-27z" fill="#1b2036"/><path d="M196 116c4 10 7 26 3 42l7 1c4-14 3-30-1-44z" fill="#1b2036"/><path transform="translate(0 7)" d="M202 132c-2-8-1-16 2-21l2 .5 1-4 2.500.5.500 4 2-3 2 1-1 5 2.500-2 1.500 1.500c-2 4-3 10-5 15z" fill="#f6d9c6" stroke="#3a2f3f" stroke-width=".5"/><path transform="translate(0 7)" d="M199 133c5-3 12-3 17 0l6 26-16 4z" fill="#4d8ad0"/><path d="M37 202C37 170 40 146 55 130L64 127 88 136C100 142 112 160 119 186L112 200 70 214Z" fill="#a9c0de"/><path d="M64 122L80 128 84 140 72 146 62 132Z" fill="#f6d9c6"/><path d="M57 131L75 155 84 139 79 132 70 140 62 128Z" fill="#fff"/><path d="M70 106L86 100C90 104 91.500 109 91.500 113L93.500 117.500 91.500 120C91.500 126 88.500 132 84 135 80 137 75 137 72 135L64 126 67 116Z" fill="#f6d9c6"/><ellipse cx="62.500" cy="122" rx="2.800" ry="3.800" fill="#f6d9c6" stroke="#3a2f3f" stroke-width=".4"/><path d="M59 126C52 121 48.500 110 52.500 101 56.500 93.500 68 91.500 80 93.500 84.500 95 87 98 87 100.500L83 104.500C78 105 74 106 71 107.500 69 110.500 68.500 114 68.500 117.500L65.500 118.500C64 117.500 61 118 60.500 121Z" fill="#1b2036"/><g fill="none" stroke="#1b2036" stroke-width="1.100"><rect x="79.500" y="111.500" width="6.500" height="6.500" rx="2.500"/><rect x="87.500" y="110.500" width="5" height="6.500" rx="2.200"/><path d="M79.500 114.500L65 118.500"/></g><ellipse cx="81" cy="123.500" rx="3" ry="2" fill="#f2a596" stroke="none" opacity=".75"/><path d="M86 127.500c1.500 1 3 .8 4-.3" stroke="#b9433f" stroke-width=".9" fill="none"/><path d="M60 178l44 2c4 0 6 3 6 7s-3 7-7 7l-46-2z" fill="#a9c0de"/><path d="M104 181c6-3 14-2 18 2 3 4 2 9-3 11-5 1-12 0-15-3z" fill="#f6d9c6" stroke="#3a2f3f" stroke-width=".5"/><path d="M144 172c4-2 10-2 12 1 1 3-2 6-6 6-4 1-8 0-8-3z" fill="#f6d9c6"/><path d="M156 182c4-4 12-6 18-3 3 2 3 6 0 8-5 2-12 1-16-1z" fill="#f6d9c6" stroke="#3a2f3f" stroke-width=".5"/><path d="M172 180l6 10" stroke="#1b2036" stroke-width="1.200"/><path d="M62 186l172-3 10 52H56z" fill="#fdfdfe"/><path d="M56 234h150l2 8H58z" fill="#8fb6e4"/><rect x="68" y="241" width="133" height="16" fill="#4d8ad0"/><rect x="96" y="257" width="100" height="17" fill="#fbfbfd"/><path d="M104 181c6-3 14-2 18 2 3 4 2 9-3 11-5 1-12 0-15-3z" fill="#f6d9c6" stroke="#3a2f3f" stroke-width=".5"/><path d="M60 180l44 1c4 0 6 3 6 7s-3 7-7 7l-44-2z" fill="#a9c0de"/><path d="M156 182c4-4 12-6 18-3 3 2 3 6 0 8-5 2-12 1-16-1z" fill="#f6d9c6" stroke="#3a2f3f" stroke-width=".5"/><path d="M172 181l5 9" stroke="#1b2036" stroke-width="1.200"/><path d="M125 198l16-13 28 8-14 16z" fill="#f5a623"/><path d="M131 188l14-6 12 6-12 8z" fill="#f7b84a"/><path d="M125 198l30 11 .5 2.500-31-11z" fill="#d98716"/><path d="M170 190l30-4 9 15-32 5z" fill="#fff" stroke="#9aa7c4" stroke-width=".5"/><path d="M176 192.500l20-3M177 195.500l21-3M178.500 198.500l21-3M180 201.500l18-3" stroke="#8e9bb8" stroke-width=".7"/><path d="M88 204l22-6 12 8-20 8z" fill="#fff" stroke="#9aa7c4" stroke-width=".5"/><path d="M95 205l14-3.500M98 208l14-3.500" stroke="#a9b4cc" stroke-width=".7"/><path d="M198 219l26-4 6 6-26 5z" fill="#fff" stroke="#9aa7c4" stroke-width=".5"/><ellipse cx="92.5" cy="221.5" rx="12.24" ry="3" fill="#c98f4e"/><path d="M84 209.5h17v7.15c0 6.5-17 6.5-17 0z" fill="#1d2a4d"/><ellipse cx="92.5" cy="209.5" rx="8.5" ry="2" fill="#f3f5fa"/><ellipse cx="171.0" cy="223.5" rx="11.52" ry="3" fill="#c98f4e"/><path d="M163 211.5h16v7.15c0 6.5-16 6.5-16 0z" fill="#1d2a4d"/><ellipse cx="171.0" cy="211.5" rx="8.0" ry="2" fill="#f3f5fa"/><path d="M204.5 199.5h11.5v6.6000000000000005c0 6.0-11.5 6.0-11.5 0z" fill="#1d2a4d"/><ellipse cx="210.25" cy="199.5" rx="5.75" ry="2" fill="#f3f5fa"/><ellipse cx="210" cy="211" rx="8" ry="2" fill="#c98f4e" opacity=".8"/><path d="M204.5 199.5h11.5v6.6000000000000005c0 6.0-11.5 6.0-11.5 0z" fill="#1d2a4d"/><ellipse cx="210.25" cy="199.5" rx="5.75" ry="2" fill="#f3f5fa"/><path d="M120 204.5h10.5v5.5c0 5.0-10.5 5.0-10.5 0z" fill="#5b9ae0"/><ellipse cx="125.25" cy="204.5" rx="5.25" ry="2" fill="#f3f5fa"/><path d="M155 200.5h14v7.700000000000001c0 7.0-14 7.0-14 0z" fill="#4d8ad0"/><ellipse cx="162.0" cy="200.5" rx="7.0" ry="2" fill="#f3f5fa"/><ellipse cx="162" cy="201" rx="5.500" ry="1.800" fill="#1d2a4d"/><path d="M216.5 190.5h10.5v5.5c0 5.0-10.5 5.0-10.5 0z" fill="#8db4e2"/><ellipse cx="221.75" cy="190.5" rx="5.25" ry="2" fill="#f3f5fa"/><path d="M187.5 176.0h9.5v5.5c0 5.0-9.5 5.0-9.5 0z" fill="#e9eff8"/><ellipse cx="192.25" cy="176.0" rx="4.75" ry="2" fill="#f3f5fa"/><path d="M29 226c-2-14 4-28 16-31l14 1c6 6 10 10 14 12l10 3-4 12-14 4-10 8z" fill="#4d8ad0"/><path d="M73 207c2-3 6-5 9-4 3 1 4 5 2 8l-6 3z" fill="#f6d9c6"/><ellipse cx="56" cy="181" rx="11" ry="12" fill="#f6d9c6"/><path d="M36 186c-2-14 4-26 16-27 8 0 14 4 15 10-4 0-8 2-10 6 0 6-2 12-6 18-6 0-12-2-15-7z" fill="#1b2036"/><ellipse cx="61" cy="186" rx="3" ry="2.200" fill="#f2a596" stroke="none" opacity=".85"/><path d="M0 224c4-14 14-24 28-24l14 8 4 18-20 6z" fill="#4d8ad0"/><path d="M0 142c6-8 20-8 28-2 8 6 10 18 8 30-1 14-4 26-10 36-4 4-10 6-16 4l-10-2z" fill="#1b2036"/><path d="M30 168c4 2 6 8 5 14-1 8-4 16-9 22l-4-6c4-10 6-20 8-30z" fill="#f6d9c6"/><path d="M0 228c12-8 34-10 50-4 16 8 30 24 38 42l2 8H0z" fill="#ab9097"/><path d="M8 240c14 2 30 10 40 24M30 232c10 6 22 18 30 34M0 256c10 0 24 6 32 18" stroke="#8a6f7a" stroke-width=".7" fill="none"/><path d="M74 254c3-6 10-8 15-5 4 3 6 9 4 14l-13 3z" fill="#f6d9c6" stroke="#3a2f3f" stroke-width=".5"/><path d="M74 258c6-2 16 0 20 6l1 10H72z" fill="#ab9097"/><path d="M186 274c2-20 10-38 24-46l18-16c6-10 16-16 30-16h20c6 2 10 6 12 12v66z" fill="#a8919a"/><path d="M228 212c10 8 24 12 40 8l22-10M214 240c-6 10-10 22-12 34M258 226c-2 16-2 32 0 48" stroke="#846b78" stroke-width=".8" fill="none"/><path d="M222 176c2-10 8-14 14-12l6 28c0 6-2 12-6 14l-8 6c-4-10-6-24-6-36z" fill="#f6d9c6"/><path transform="translate(0 4)" d="M227 178c-2-16 8-26 22-26 8 0 14 4 18 8 4-4 12-6 18-2 6 4 7 14 3 20-3 6-10 8-16 6-4 12-12 20-24 22-8 0-14-6-16-14-3-4-5-8-5-14z" fill="#1b2036"/><path d="M223 183l7-1.500v6l-7 1z" fill="none" stroke="#1b2036" stroke-width="1"/><path d="M202 232c2-6 8-10 14-10 4 0 8 2 10 6l-8 10-14 4z" fill="#f6d9c6" stroke="#3a2f3f" stroke-width=".5"/><path d="M212 206c4-3 10-3 14 0l2 4-14 2z" fill="#f6d9c6"/><path d="M99 269c6-4 30-4 37 0v5H99z" fill="#e8501f"/><path d="M104 252c0-8 6-14 14-14 6 0 10 2 14 6l6-8 3 2-5 12c0 8-2 14-6 18h-24z" fill="#1f3f7a"/><rect x="102" y="251" width="19" height="19" rx="5" fill="#3f78c4"/><rect x="105" y="259" width="13" height="7" rx="2" fill="#356ab3"/><circle cx="118" cy="236" r="8.500" fill="#e8491d"/><path d="M124 230c3 2 4 6 3 10l-5 2z" fill="#f6d9c6"/><circle cx="115.500" cy="226" r="6" fill="#1b2036"/><rect x="126" y="228" width="3" height="3" fill="#4fbfa0"/><path d="M96 262l4-7h52l-4 19H96z" fill="none" stroke="#c9d2e4" stroke-width=".6"/></g></svg>
<div class="abs" style="left:169px;top:29.5px;width:10px;height:16.0px;background:#fff;border-radius:3px;box-shadow:0 0 1.500px rgba(0,0,0,.25)"></div>
<div class="abs" style="left:173.2px;top:33.5px;width:1.600px;height:1.600px;border-radius:50%;background:#444;box-shadow:0 3px 0 #444,0 6px 0 #444"></div>
<div class="abs" style="left:184px;top:29.5px;width:27px;height:16.0px;background:#fff;border-radius:3px;box-shadow:0 0 1.500px rgba(0,0,0,.25)"></div>
<svg class="abs" style="left:187.5px;top:33.0px" width="10" height="10" viewBox="0 0 11 11"><path d="M5.500 1a4.500 4.500 0 1 0 0 9c.8 0 1.200-.5 1.200-1.100 0-.7-.5-.9-.5-1.500 0-.5.400-.9 1-.9h1.200c1.100 0 1.900-.8 1.900-2C10.300 2.600 8.200 1 5.500 1z" fill="none" stroke="#444" stroke-width="1.200"/><circle cx="3.600" cy="4.300" r=".8" fill="#444"/></svg>
<svg class="abs" style="left:200.5px;top:36.0px" width="7" height="5" viewBox="0 0 7 5"><path d="M1 1l2.500 2.500L6 1" fill="none" stroke="#444" stroke-width="1"/></svg>
<div class="abs" style="left:215px;top:29.5px;width:27px;height:16.0px;background:#fff;border-radius:3px;box-shadow:0 0 1.500px rgba(0,0,0,.25)"></div>
<svg class="abs" style="left:218.5px;top:33.0px" width="10" height="10" viewBox="0 0 11 11"><path d="M4.500 1.500l1 2.500 2.500 1-2.500 1-1 2.500-1-2.500L1 5l2.500-1z" fill="#333"/><circle cx="8.800" cy="2.200" r="1" fill="#333"/><circle cx="8.800" cy="8.600" r="1" fill="#333"/></svg>
<svg class="abs" style="left:231.5px;top:36.0px" width="7" height="5" viewBox="0 0 7 5"><path d="M1 1l2.500 2.500L6 1" fill="none" stroke="#444" stroke-width="1"/></svg>
<div class="abs" style="left:212px;top:21.5px;width:2px;height:15.0px;background:#a2a3b0"></div>
<div class="abs" style="left:912px;top:30px;width:17px;height:17px;background:#fff;border:1px solid #e7e7ec;border-radius:3px"></div>
<svg class="abs" style="left:916.5px;top:34.5px" width="8" height="8" viewBox="0 0 8 8"><rect x=".5" y=".5" width="7" height="7" rx="1" fill="none" stroke="#55565e" stroke-width=".9"/><rect x=".5" y=".5" width="7" height="1.800" fill="#55565e"/><path d="M2 4.300h4M2 5.900h2.500" stroke="#77787f" stroke-width=".7"/></svg>
<div class="abs ser" style="left:495px;top:79.5px;font-size:30.100px;font-weight:bold;color:#1b2440;line-height:42.700px;letter-spacing:-.1px;white-space:nowrap">Родительское собрание<br>6 &quot;В&quot;</div>
<div class="abs ser" style="left:495px;top:178.5px;font-size:12.200px;color:#4b4c55;line-height:19.200px;white-space:nowrap;letter-spacing:-.1px">Причины правонарушений несовершеннолетних и профилактика<br>девиантного поведения подростков.</div>
<div class="abs ser" style="left:495px;top:230.5px;font-size:12.200px;color:#4b4c55;line-height:19.200px;white-space:nowrap;letter-spacing:-.1px"><b style="color:#3a3b44">Вывод:</b> Безопасность детей <span style="font-size:8.600px;vertical-align:1px">—</span> общая ответственность семьи и школы.</div>
<svg class="abs" style="left:804px;top:215px" width="7" height="11" viewBox="0 0 7 11"><path d="M1 .7h2l.5.5.5-.5h2M3.500 1.200v8.600M1 10.300h2l.5-.5.5.5h2" fill="none" stroke="#333" stroke-width=".9"/></svg>
<div class="abs" style="left:501px;top:320px;width:97px;height:22px;background:#fff;border-radius:4px;box-shadow:0 1px 3px rgba(0,0,0,.12)"></div>
<div class="abs" style="left:512.5px;top:322px;font-size:13px;color:#222">+</div>
<svg class="abs" style="left:544px;top:325.5px" width="10" height="10" viewBox="0 0 11 11"><path d="M4.500 1.500l1 2.500 2.500 1-2.500 1-1 2.500-1-2.500L1 5l2.500-1z" fill="#1f2a55"/><circle cx="8.800" cy="2.200" r="1" fill="#1f2a55"/><circle cx="8.800" cy="8.600" r="1" fill="#1f2a55"/></svg>
<svg class="abs" style="left:576.5px;top:326.5px" width="9" height="8" viewBox="0 0 9 8"><rect x=".5" y=".5" width="8" height="7" rx="1.200" fill="none" stroke="#222" stroke-width="1"/><path d="M.5 2.800h8M3.300 2.800v4.700" stroke="#222" stroke-width="1"/></svg>
<div class="abs" style="left:162.5px;top:350.5px;width:774.5px;height:83.5px;background:#fff;border:1px solid #86b3e6;border-radius:2px 2px 0 0"></div>
<div class="abs" style="left:169px;top:360px;width:10px;height:16px;background:#fff;border-radius:3px;box-shadow:0 0 1.500px rgba(0,0,0,.25)"></div>
<div class="abs" style="left:173.2px;top:364px;width:1.600px;height:1.600px;border-radius:50%;background:#444;box-shadow:0 3px 0 #444,0 6px 0 #444"></div>
<div class="abs" style="left:184px;top:360px;width:27px;height:16px;background:#fff;border-radius:3px;box-shadow:0 0 1.500px rgba(0,0,0,.25)"></div>
<svg class="abs" style="left:187.5px;top:363.5px" width="10" height="10" viewBox="0 0 11 11"><path d="M5.500 1a4.500 4.500 0 1 0 0 9c.8 0 1.200-.5 1.200-1.100 0-.7-.5-.9-.5-1.500 0-.5.400-.9 1-.9h1.200c1.100 0 1.900-.8 1.900-2C10.300 2.600 8.200 1 5.500 1z" fill="none" stroke="#444" stroke-width="1.200"/><circle cx="3.600" cy="4.300" r=".8" fill="#444"/></svg>
<svg class="abs" style="left:200.5px;top:366.5px" width="7" height="5" viewBox="0 0 7 5"><path d="M1 1l2.500 2.500L6 1" fill="none" stroke="#444" stroke-width="1"/></svg>
<div class="abs" style="left:215px;top:360px;width:27px;height:16px;background:#fff;border-radius:3px;box-shadow:0 0 1.500px rgba(0,0,0,.25)"></div>
<svg class="abs" style="left:218.5px;top:363.5px" width="10" height="10" viewBox="0 0 11 11"><path d="M4.500 1.500l1 2.500 2.500 1-2.500 1-1 2.500-1-2.500L1 5l2.500-1z" fill="#333"/><circle cx="8.800" cy="2.200" r="1" fill="#333"/><circle cx="8.800" cy="8.600" r="1" fill="#333"/></svg>
<svg class="abs" style="left:231.5px;top:366.5px" width="7" height="5" viewBox="0 0 7 5"><path d="M1 1l2.500 2.500L6 1" fill="none" stroke="#444" stroke-width="1"/></svg>
<div class="abs" style="left:912px;top:360px;width:17px;height:17px;background:#fff;border:1px solid #e7e7ec;border-radius:3px"></div>
<svg class="abs" style="left:916.5px;top:364.5px" width="8" height="8" viewBox="0 0 8 8"><rect x=".5" y=".5" width="7" height="7" rx="1" fill="none" stroke="#55565e" stroke-width=".9"/><rect x=".5" y=".5" width="7" height="1.800" fill="#55565e"/><path d="M2 4.300h4M2 5.900h2.500" stroke="#77787f" stroke-width=".7"/></svg>
<div class="abs ser" style="left:205px;top:386px;font-size:14.950px;font-weight:bold;color:#1b2440;white-space:nowrap;letter-spacing:-.1px">Слайд 2. Повестка дня</div>
<div class="abs" style="left:209px;top:427px;width:25px;height:6px;background:#f1f1f4;border-radius:3px 3px 0 0"></div>
<div class="abs" style="left:557px;top:427px;width:25px;height:6px;background:#f1f1f4;border-radius:3px 3px 0 0"></div>
<div class="abs" style="left:983px;top:68px;width:29px;height:264px;background:#fff;border-radius:6px;box-shadow:0 1px 3px rgba(0,0,0,.12)"></div>
<svg class="abs" style="left:991.5px;top:77.5px" width="11" height="11" viewBox="0 0 11 11" overflow="visible"><circle cx="4.300" cy="4.300" r="3.300" fill="none" stroke="#4a78d6" stroke-width="1.100"/><path d="M6.800 6.800l3.400 3.400" stroke="#2a5bc4" stroke-width="1.500"/></svg>
<svg class="abs" style="left:991.5px;top:106.5px" width="11" height="11" viewBox="0 0 11 11" overflow="visible"><text x="-2" y="10" font-family="Liberation Sans,sans-serif" font-size="12" fill="#2a5bc4" stroke="#2a5bc4" stroke-width=".3">A</text><text x="6.300" y="10" font-family="Liberation Sans,sans-serif" font-size="9.500" fill="#86a6e6">a</text></svg>
<svg class="abs" style="left:991.5px;top:135.5px" width="11" height="11" viewBox="0 0 11 11" overflow="visible"><rect x=".5" y="1" width="10" height="9" rx="1.200" fill="#2a5bc4"/><path d="M1.500 8.500l3-3.500 2 2.200 1.200-1.200 2 2.500z" fill="#cfe0ff"/><circle cx="7.800" cy="3.300" r="1" fill="#cfe0ff"/></svg>
<svg class="abs" style="left:991.5px;top:164.5px" width="11" height="11" viewBox="0 0 11 11" overflow="visible"><rect x=".5" y=".8" width="4" height="4" rx="1.200" fill="#7d9fe0"/><rect x="6" y=".8" width="4" height="4" rx="1.200" fill="#7d9fe0"/><rect x=".5" y="6.200" width="4" height="4" rx="1.200" fill="#7d9fe0"/><path d="M8 6v4.500M5.800 8.200h4.500" stroke="#2a5bc4" stroke-width="1.400"/></svg>
<svg class="abs" style="left:991.5px;top:193.5px" width="11" height="11" viewBox="0 0 11 11" overflow="visible"><rect x="2" y="1.500" width="9.500" height="8" rx="4" fill="#9db8ea"/><circle cx="4.500" cy="5.500" r="4" fill="#2a5bc4"/><circle cx="4.500" cy="5.500" r="1.800" fill="#fff"/></svg>
<svg class="abs" style="left:991.5px;top:223.5px" width="11" height="11" viewBox="0 0 11 11" overflow="visible"><rect x="1" y="5.500" width="2.400" height="5" fill="#2a5bc4"/><rect x="4.300" y="1" width="2.400" height="9.500" fill="#2a5bc4"/><rect x="7.600" y="3.500" width="2.400" height="7" fill="#7d9fe0"/></svg>
<svg class="abs" style="left:991.5px;top:252.5px" width="11" height="11" viewBox="0 0 11 11" overflow="visible"><rect x=".5" y="1" width="10" height="9" rx="1.200" fill="#2a5bc4"/><path d="M2 3.500h3M6.500 3.500h3M2 5.800h3M6.500 5.800h3M2 8h3M6.500 8h3" stroke="#cfe0ff" stroke-width="1"/></svg>
<svg class="abs" style="left:991.5px;top:281.5px" width="11" height="11" viewBox="0 0 11 11" overflow="visible"><rect x=".5" y="1.500" width="10" height="8" rx="1.500" fill="#7d9fe0"/><rect x=".5" y="3.500" width="10" height="3.500" fill="#2a5bc4"/></svg>
<svg class="abs" style="left:991.5px;top:311.5px" width="11" height="11" viewBox="0 0 11 11" overflow="visible"><rect x=".5" y="4" width="8" height="6" rx="1" fill="none" stroke="#7d9fe0" stroke-width="1.100"/><path d="M4 8l.6-2.200L9.300 1l1.600 1.600L6.200 7.400z" fill="#2a5bc4"/></svg>
<div class="abs" style="left:1014px;top:0px;width:9px;height:431px;background:#fbfbfc"></div>
<div class="abs" style="left:1015.7px;top:11.5px;width:5.3px;height:35.5px;background:#98989b;border-radius:3px"></div>
<svg class="abs" style="left:1015.5px;top:3px" width="6" height="4" viewBox="0 0 6 4"><path d="M0 4L3 0l3 4z" fill="#77777b"/></svg>
<svg class="abs" style="left:1015.5px;top:423.5px" width="6" height="4" viewBox="0 0 6 4"><path d="M0 0l3 4 3-4z" fill="#77777b"/></svg>
<div class="abs" style="left:983px;top:373px;width:28px;height:14px;background:#fff;border-radius:7px;box-shadow:0 0 2px rgba(0,0,0,.12)"></div>
<div class="abs" style="left:987px;top:375.5px;font-size:7.700px;color:#222;letter-spacing:-.15px;-webkit-text-stroke:.2px #222">100%</div>
<div class="abs" style="left:987px;top:396px;width:23px;height:23px;background:#fff;border-radius:50%;box-shadow:0 0 2px rgba(0,0,0,.15)"></div>
<div class="abs" style="left:995.2px;top:401px;font-size:11px;color:#222">?</div>
<div class="abs" style="left:881.5px;top:395px;width:97.5px;height:25.5px;background:#fff;border-radius:13px;box-shadow:0 0 3px rgba(0,0,0,.13)"></div>
<div class="abs" style="left:892px;top:398px;font-size:10.600px;font-weight:bold;color:#2f2f33;letter-spacing:0;-webkit-text-stroke:.3px #2f2f33">Начать</div>
<div class="abs" style="left:958px;top:400px;font-size:6.500px;color:#9a9aa0">1/8</div>
<div class="abs" style="left:892px;top:413.5px;width:78px;height:2.0px;background:#ededf0;border-radius:1px"></div>
<div class="abs" style="left:892px;top:413.5px;width:10px;height:2.0px;background:#3e9b4b;border-radius:1px"></div>
</div>
</div>

<!-- ================= PARTICIPANTS ================= -->
<div id="ppl">
<div class="abs" style="left:1095px;top:88px;width:153px;height:516px;background:#242424;border-radius:8px"></div>
<div class="abs" style="left:1094px;top:88px;width:155px;height:87.800px;border:2px solid #2fd880;border-radius:7px;overflow:hidden;background:#1c1a15"><div class="abs" style="left:0;top:0;width:151px;height:85px;filter:blur(2.200px)"><div class="abs" style="left:14px;top:2px;width:136px;height:15px;background:linear-gradient(90deg,#4a452e,#8a8052 35%,#7a7148 70%,#3a3626)"></div><div class="abs" style="left:0;top:14px;width:151px;height:9px;background:linear-gradient(90deg,#22211a,#3d3a28 40%,#2a271d)"></div><div class="abs" style="left:7px;top:8px;width:10px;height:62px;background:#4d4c3a"></div><div class="abs" style="left:17px;top:14px;width:12px;height:56px;background:#66654f"></div><div class="abs" style="left:29px;top:22px;width:40px;height:46px;background:radial-gradient(ellipse at 50% 60%,#cdbb8c 0%,#a8966a 45%,#5e5438 100%)"></div><div class="abs" style="left:54px;top:32px;width:14px;height:16px;border-radius:50%;background:#c98d35"></div><div class="abs" style="left:20px;top:60px;width:48px;height:10px;background:#5a5238"></div><div class="abs" style="left:118px;top:18px;width:33px;height:60px;background:#1e1b15"></div></div><div class="abs" style="left:65px;top:17px;width:52px;height:40px;border-radius:26px 26px 10px 10px;background:#2c2521;filter:blur(1.800px)"></div><div class="abs" style="left:70px;top:38px;width:42px;height:34px;border-radius:12px 12px 16px 16px;background:radial-gradient(ellipse at 50% 25%,#a8958d 0%,#8b7870 50%,#5b4c46 100%);filter:blur(1.400px)"></div><div class="abs" style="left:73px;top:56px;width:17px;height:15px;border:1.300px solid #2f2926;border-radius:50%;opacity:.85;filter:blur(.5px)"></div><div class="abs" style="left:92px;top:56px;width:17px;height:15px;border:1.300px solid #2f2926;border-radius:50%;opacity:.85;filter:blur(.5px)"></div><div class="abs" style="left:4px;top:64.500px;width:146px;height:18.500px;background:rgba(48,46,42,.78)"></div><div class="abs zt" style="left:5px;top:65.500px;font-size:12.100px;color:#fff;white-space:nowrap;letter-spacing:0">Varvara Pavletenko_ШЛ_...</div></div>
<div class="abs" style="left:1138px;top:184px;width:68px;height:68px;border-radius:9px;background:#b246c6"></div>
<div class="abs zt" style="left:1138px;top:190px;width:68px;text-align:center;font-size:41px;color:#fff;line-height:56px">В</div>
<div class="abs" style="left:1098px;top:241px;width:78px;height:17px;border-radius:4px;background:#262626"></div>
<svg class="abs" style="left:1100px;top:242px" width="12" height="14" viewBox="0 0 12 14"><rect x="4" y="1" width="4.600" height="7.500" rx="2.300" fill="#e0444b"/><path d="M2 6.500c0 2.500 1.800 4.200 4.300 4.200s4.300-1.700 4.300-4.200M6.300 10.700v2.300" fill="none" stroke="#e0444b" stroke-width="1.100"/><path d="M10.800 1.200L1.800 12.800" stroke="#e0444b" stroke-width="1.400"/></svg>
<div class="abs zt nm" style="left:1118px;top:242px">Вероника</div>
<div class="abs" style="left:1138px;top:270px;width:68px;height:68px;border-radius:9px;background:#8450c8"></div>
<div class="abs zt" style="left:1138px;top:276px;width:68px;text-align:center;font-size:41px;color:#fff;line-height:56px">E</div>
<div class="abs" style="left:1098px;top:327px;width:144px;height:17px;border-radius:4px;background:#262626"></div>
<svg class="abs" style="left:1100px;top:328px" width="12" height="14" viewBox="0 0 12 14"><rect x="4" y="1" width="4.600" height="7.500" rx="2.300" fill="#e0444b"/><path d="M2 6.500c0 2.500 1.800 4.200 4.300 4.200s4.300-1.700 4.300-4.200M6.300 10.700v2.300" fill="none" stroke="#e0444b" stroke-width="1.100"/><path d="M10.800 1.200L1.800 12.800" stroke="#e0444b" stroke-width="1.400"/></svg>
<div class="abs zt nm" style="left:1118px;top:328px;font-size:12.400px;letter-spacing:.02px">Elvira Yessenbulatova</div>
<div class="abs zt" style="left:1096px;top:379.5px;width:151px;text-align:center;font-size:14px;font-weight:bold;color:#fff;letter-spacing:-.1px">User</div>
<div class="abs" style="left:1098px;top:413px;width:48px;height:17px;border-radius:4px;background:#2e2e2e"></div>
<svg class="abs" style="left:1100px;top:414px" width="12" height="14" viewBox="0 0 12 14"><rect x="4" y="1" width="4.600" height="7.500" rx="2.300" fill="#e0444b"/><path d="M2 6.500c0 2.500 1.800 4.200 4.300 4.200s4.300-1.700 4.300-4.200M6.300 10.700v2.300" fill="none" stroke="#e0444b" stroke-width="1.100"/><path d="M10.800 1.200L1.800 12.800" stroke="#e0444b" stroke-width="1.400"/></svg>
<div class="abs zt nm" style="left:1118px;top:414px">User</div>
<div class="abs zt" style="left:1096px;top:465.5px;width:151px;text-align:center;font-size:13.9px;font-weight:bold;color:#fff;letter-spacing:-.1px">Измайлова</div>
<div class="abs" style="left:1098px;top:499px;width:88px;height:17px;border-radius:4px;background:#2e2e2e"></div>
<svg class="abs" style="left:1100px;top:500px" width="12" height="14" viewBox="0 0 12 14"><rect x="4" y="1" width="4.600" height="7.500" rx="2.300" fill="#e0444b"/><path d="M2 6.500c0 2.500 1.800 4.200 4.300 4.200s4.300-1.700 4.300-4.200M6.300 10.700v2.300" fill="none" stroke="#e0444b" stroke-width="1.100"/><path d="M10.800 1.200L1.800 12.800" stroke="#e0444b" stroke-width="1.400"/></svg>
<div class="abs zt nm" style="left:1118px;top:500px">Измайлова</div>
<div class="abs zt" style="left:1096px;top:551.5px;width:151px;text-align:center;font-size:13.1px;font-weight:bold;color:#fff;letter-spacing:-.1px">Екатерина</div>
<div class="abs" style="left:1098px;top:585px;width:83px;height:17px;border-radius:4px;background:#2e2e2e"></div>
<svg class="abs" style="left:1100px;top:586px" width="12" height="14" viewBox="0 0 12 14"><rect x="4" y="1" width="4.600" height="7.500" rx="2.300" fill="#e0444b"/><path d="M2 6.500c0 2.500 1.800 4.200 4.300 4.200s4.300-1.700 4.300-4.200M6.300 10.700v2.300" fill="none" stroke="#e0444b" stroke-width="1.100"/><path d="M10.800 1.200L1.800 12.800" stroke="#e0444b" stroke-width="1.400"/></svg>
<div class="abs zt nm" style="left:1118px;top:586px">Екатерина</div>
<div class="abs" style="left:1032.800px;top:359.500px;width:.9px;height:24.500px;background:#d6d6d6"></div><div class="abs" style="left:1036px;top:359.500px;width:.9px;height:24.500px;background:#d6d6d6"></div>
</div>

</div>
</body>
</html>
